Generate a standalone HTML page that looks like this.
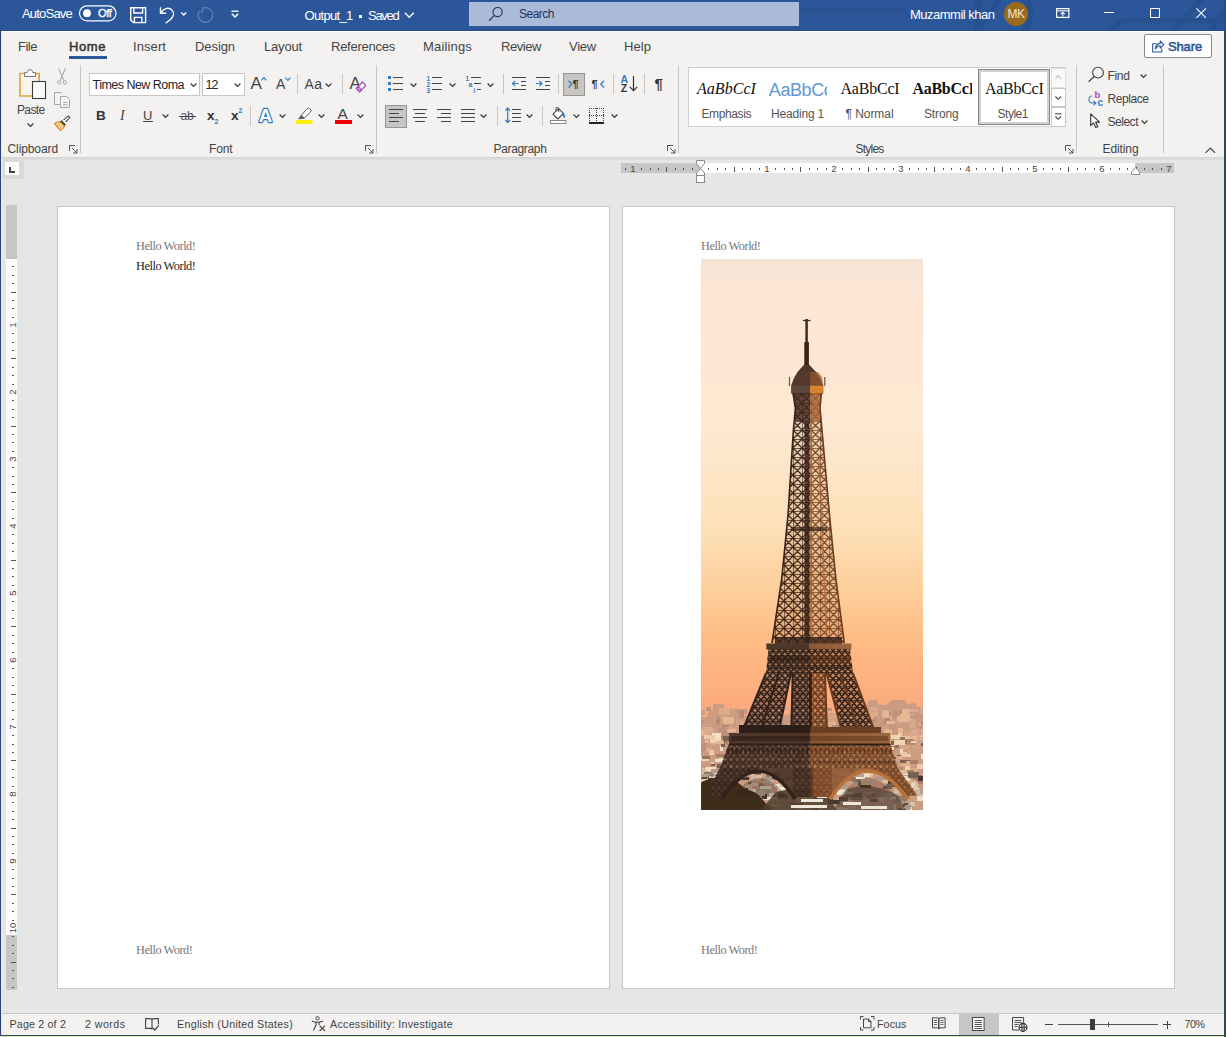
<!DOCTYPE html>
<html>
<head>
<meta charset="utf-8">
<title>Output_1 - Word</title>
<style>
*{box-sizing:border-box;margin:0;padding:0}
html,body{width:1226px;height:1037px;overflow:hidden;background:#e6e6e6;font-family:"Liberation Sans",sans-serif;font-size:12px;color:#444}
#win{position:absolute;left:0;top:0;width:1226px;height:1037px;overflow:hidden;background:#e6e6e6}
#win div,#win span,#win svg{position:absolute}
.t{white-space:nowrap;line-height:1;color:#444;font-size:12px}
.ts{font-family:"Liberation Serif",serif}
.b{background:#f3f2f1}
svg{overflow:visible}
.ln{stroke:#444;stroke-width:1;fill:none;shape-rendering:crispEdges}
.st{stroke:#444;stroke-width:1;fill:none}
.bl{stroke:#2e7cc4;stroke-width:1;fill:none}
.vs{width:1px;background:#c8c6c4}
.gs{width:1px;background:#c8c6c4;top:65px;height:88px}
</style>
</head>
<body>
<svg width="0" height="0" style="position:absolute">
<defs>
<symbol id="chev" viewBox="0 0 8 5" overflow="visible"><path d="M0.6 0.5 L3.5 3.4 L6.4 0.5" fill="none" stroke="#3b3b3b" stroke-width="1.3"/></symbol>
<symbol id="dl" viewBox="0 0 9 9" overflow="visible"><path d="M0.5 6 V0.5 H6 M3 3 L8 8 M8 4 V8 H4" fill="none" stroke="#555" stroke-width="1"/></symbol>
</defs>
</svg>
<div id="win">

<!-- TITLE -->
<div style="left:0px;top:0px;width:1226px;height:31px;background:#2b579a;"></div>
<svg style="left:800px;top:0px;overflow:hidden" width="426" height="31" viewBox="0 0 426 31"><g fill="none" stroke="#27508f" stroke-width="5"><path d="M-2 10 H105" stroke-width="4"/><circle cx="203" cy="14" r="27" stroke-width="6"/><path d="M172 36 L200 -2"/><path d="M308 34 L321 20.5 H430 M370 34 L403 -2 M409 34 L432 0"/></g></svg>
<div style="left:0px;top:30px;width:1226px;height:1px;background:#2a4a7e;"></div>
<span id="t1" class="t" style="left:22px;top:7.00px;font-size:13px;color:#fff;letter-spacing:-0.797px;">AutoSave</span>
<svg style="left:78px;top:5px;" width="40" height="17" viewBox="0 0 40 17"><rect x="1.5" y="0.8" width="36.5" height="15" rx="7.5" fill="none" stroke="#fff" stroke-width="1.2"/><circle cx="9" cy="8.2" r="3.9" fill="#fff"/></svg>
<span id="t2" class="t" style="left:98px;top:8.00px;font-size:11px;color:#fff;letter-spacing:-0.328px;-webkit-text-stroke:0.35px #fff;">Off</span>
<svg style="left:130px;top:7px;" width="17" height="17" viewBox="0 0 17 17"><path d="M0.7 0.7 H15.6 V15.6 H3.4 L0.7 12.9 Z" fill="none" stroke="#fff" stroke-width="1.4"/><path d="M3.8 0.7 V6 H12.6 V0.7" fill="none" stroke="#fff" stroke-width="1.4"/><path d="M4.4 15.6 V10.4 H11.8 V15.6" fill="none" stroke="#fff" stroke-width="1.4"/></svg>
<svg style="left:159px;top:6px;" width="17" height="18" viewBox="0 0 17 18"><path d="M1.5 1.2 V7.3 H7.2" fill="none" stroke="#fff" stroke-width="1.4"/><path d="M1.8 7 C4 2.5 9.5 0.8 12.8 4 C16 7.2 14 11 12 13 L6.6 17.2" fill="none" stroke="#fff" stroke-width="1.4"/></svg>
<svg style="left:181px;top:12px;" width="6" height="4" viewBox="0 0 6 4"><path d="M0.3 0.5 L2.8 3 L5.3 0.5" fill="none" stroke="#fff" stroke-width="1.3"/></svg>
<svg style="left:197px;top:6px;" width="18" height="18" viewBox="0 0 18 18"><path d="M5.6 1.2 V5.8 H1.2" fill="none" stroke="#5f80b6" stroke-width="1.3"/><path d="M6.5 2 A7.3 7.3 0 1 1 1.6 6.6" fill="none" stroke="#5f80b6" stroke-width="1.3"/></svg>
<svg style="left:230.5px;top:10px;" width="8" height="9" viewBox="0 0 8 9"><path d="M0.5 1.2 H7.5" stroke="#fff" stroke-width="1.3" fill="none"/><path d="M0.8 3.8 L4 7 L7.2 3.8" fill="none" stroke="#fff" stroke-width="1.5"/></svg>
<span id="t3" class="t" style="left:304.5px;top:9.00px;font-size:13px;color:#fff;letter-spacing:-0.688px;">Output_1</span>
<div style="left:359px;top:15px;width:3px;height:3px;background:#fff;"></div>
<span id="t4" class="t" style="left:368px;top:9.00px;font-size:13px;color:#fff;letter-spacing:-1.275px;">Saved</span>
<svg style="left:403.5px;top:11.5px;" width="11" height="7" viewBox="0 0 11 7"><path d="M0.8 0.8 L5.3 5.3 L9.8 0.8" fill="none" stroke="#fff" stroke-width="1.3"/></svg>
<div style="left:469px;top:2px;width:330px;height:24px;background:#a9bbd9;"></div>
<svg style="left:488px;top:6px;" width="16" height="16" viewBox="0 0 16 16"><circle cx="9.6" cy="6" r="4.6" fill="none" stroke="#2f3f5c" stroke-width="1.2"/><path d="M6.4 9.4 L1 14.8" stroke="#2f3f5c" stroke-width="1.3" fill="none"/></svg>
<span id="t5" class="t" style="left:519px;top:8.00px;font-size:12px;color:#1f3058;letter-spacing:-0.505px;">Search</span>
<span id="t6" class="t" style="left:910px;top:8.00px;font-size:13px;color:#fff;letter-spacing:-0.502px;">Muzammil khan</span>
<div style="left:1004px;top:2px;width:24px;height:24px;border-radius:12px;background:#9a6b1a"></div>
<span id="t7" class="t" style="left:1007.5px;top:8.00px;font-size:12px;color:#f3e6cf;letter-spacing:-0.500px;">MK</span>
<svg style="left:1056px;top:8px;" width="14" height="10" viewBox="0 0 14 10"><rect x="0.6" y="0.6" width="12.3" height="8.8" fill="none" stroke="#fff" stroke-width="1.2"/><path d="M0.6 2.8 H12.9" stroke="#fff" stroke-width="1.1"/><path d="M6.75 8.4 V4.4 M4.7 6.2 L6.75 4.2 L8.8 6.2" fill="none" stroke="#fff" stroke-width="1.1"/></svg>
<div style="left:1104px;top:12px;width:10px;height:1px;background:#fff;"></div>
<div style="left:1150px;top:8px;width:10px;height:10px;border:1px solid #fff"></div>
<svg style="left:1196px;top:8px;" width="10" height="10" viewBox="0 0 10 10"><path d="M0.4 0.4 L9.9 9.9 M9.9 0.4 L0.4 9.9" stroke="#fff" stroke-width="1.1" fill="none"/></svg>
<!-- TABS -->
<div style="left:0px;top:31px;width:1226px;height:126px;background:#f3f2f1;"></div>
<div style="left:0px;top:31px;width:1226px;height:1px;background:#fbfdff;"></div>
<span id="t8" class="t" style="left:18px;top:40.00px;font-size:13px;letter-spacing:-0.488px;">File</span>
<span id="t9" class="t" style="left:69px;top:40.00px;font-size:13px;color:#333;letter-spacing:0.578px;-webkit-text-stroke:0.5px #333;">Home</span>
<span id="t10" class="t" style="left:133px;top:40.00px;font-size:13px;letter-spacing:0.081px;">Insert</span>
<span id="t11" class="t" style="left:195px;top:40.00px;font-size:13px;letter-spacing:-0.078px;">Design</span>
<span id="t12" class="t" style="left:264px;top:40.00px;font-size:13px;letter-spacing:-0.174px;">Layout</span>
<span id="t13" class="t" style="left:331px;top:40.00px;font-size:13px;letter-spacing:-0.248px;">References</span>
<span id="t14" class="t" style="left:423px;top:40.00px;font-size:13px;letter-spacing:0.164px;">Mailings</span>
<span id="t15" class="t" style="left:501px;top:40.00px;font-size:13px;letter-spacing:-0.438px;">Review</span>
<span id="t16" class="t" style="left:569px;top:40.00px;font-size:13px;letter-spacing:-0.238px;">View</span>
<span id="t17" class="t" style="left:624px;top:40.00px;font-size:13px;letter-spacing:0.062px;">Help</span>
<div style="left:69px;top:56px;width:38px;height:3px;background:#2b579a;"></div>
<div style="left:1144px;top:34px;width:68px;height:24px;background:#fff;border:1px solid #8a8886;border-radius:2px"></div>
<svg style="left:1152px;top:40px;" width="13" height="13" viewBox="0 0 13 13"><path d="M4.5 3.8 H0.7 V12 H9.8 V8.6" fill="none" stroke="#2b579a" stroke-width="1.1"/><path d="M3.4 9 C3.6 5.6 5.6 3.6 8.2 3.4 V1 L11.8 4.6 L8.2 8.2 V5.8 C6.2 5.8 4.6 6.8 3.4 9 Z" fill="none" stroke="#2b579a" stroke-width="1.1" stroke-linejoin="round"/></svg>
<span id="t18" class="t" style="left:1168px;top:40.00px;font-size:13px;color:#2b579a;letter-spacing:-0.141px;-webkit-text-stroke:0.55px #2b579a;">Share</span>
<!-- RIBBON: clipboard+font -->
<svg style="left:18px;top:68px;" width="30" height="32" viewBox="0 0 30 32"><path d="M6.5 5.5 H2 V28 H14" fill="none" stroke="#e8a33d" stroke-width="1.7"/><path d="M17.5 5.5 H21.2 V13" fill="none" stroke="#e8a33d" stroke-width="1.7"/><rect x="3" y="6.5" width="11" height="20.5" fill="#faf6ef"/><path d="M6.5 8.5 V4.5 H9.2 C9.2 0.6 14.8 0.6 14.8 4.5 H17.5 V8.5 Z" fill="#fafafa" stroke="#777" stroke-width="1"/><rect x="14.5" y="13.5" width="13" height="17" fill="#fafafa" stroke="#3b3b3b" stroke-width="1.1"/></svg>
<span id="t19" class="t" style="left:17px;top:104.00px;font-size:12px;letter-spacing:-0.637px;">Paste</span>
<svg style="left:26.5px;top:123px" width="8" height="5"><use href="#chev"/></svg>
<svg style="left:57px;top:68px;" width="10" height="17" viewBox="0 0 10 17"><path d="M1.6 0.5 L6.9 12.6 M8.4 0.5 L3.1 12.6" stroke="#a6a6a6" stroke-width="1.1" fill="none"/><circle cx="2.3" cy="14.4" r="1.7" fill="none" stroke="#a6a6a6" stroke-width="1"/><circle cx="7.7" cy="14.4" r="1.7" fill="none" stroke="#a6a6a6" stroke-width="1"/></svg>
<svg style="left:54px;top:92px;" width="17" height="17" viewBox="0 0 17 17"><path d="M6 12.5 H0.5 V0.5 H6.5 L8 2" fill="none" stroke="#a6a6a6" stroke-width="1"/><path d="M6.5 4.5 H12.5 L15.5 7.5 V15.5 H6.5 Z" fill="#f6f6f6" stroke="#a6a6a6" stroke-width="1"/><path d="M9 10.5 H13.5 M9 12.8 H13.5" stroke="#a6a6a6" stroke-width="1"/></svg>
<svg style="left:54px;top:115px;" width="17" height="17" viewBox="0 0 17 17"><path d="M9.5 5.2 L14.2 0.9 L15.8 2.6 L11.6 7.2" fill="#fff" stroke="#444" stroke-width="1.1"/><path d="M7.4 5.4 L11.6 9.6 L10.3 10.9 L6.1 6.7 Z" fill="#444" stroke="#444" stroke-width="0.8"/><path d="M5.6 6.6 L0.6 8.4 C2.4 11.2 4.2 13.4 6.6 15.4 L10.6 11.4 Z" fill="#f7dcb4" stroke="#e08a1e" stroke-width="1.2" stroke-linejoin="round"/><path d="M3.2 10.8 L6 9.8 M5.4 13.4 L7.6 11.6" stroke="#e08a1e" stroke-width="0.9"/></svg>
<span id="t20" class="t" style="left:7.5px;top:143.00px;font-size:12px;letter-spacing:-0.097px;">Clipboard</span>
<svg style="left:69px;top:144.5px" width="9" height="9"><use href="#dl"/></svg>
<div class="gs" style="left:80px"></div>
<div style="left:89px;top:73px;width:111px;height:23px;background:#fff;border:1px solid #c8c6c4"></div>
<span id="t21" class="t" style="left:92.5px;top:79.00px;font-size:12.5px;color:#262626;letter-spacing:-0.526px;">Times New Roma</span>
<svg style="left:190px;top:83px" width="8" height="5"><use href="#chev"/></svg>
<div style="left:202px;top:73px;width:43px;height:23px;background:#fff;border:1px solid #c8c6c4"></div>
<span id="t22" class="t" style="left:205.5px;top:79.00px;font-size:12.5px;color:#262626;letter-spacing:-0.953px;">12</span>
<svg style="left:234px;top:83px" width="8" height="5"><use href="#chev"/></svg>
<span id="t23" class="t" style="left:250.5px;top:75.00px;font-size:17px;letter-spacing:0.656px;">A</span>
<svg style="left:260.5px;top:76.5px;" width="6" height="4" viewBox="0 0 6 4"><path d="M0.4 3.4 L2.9 0.7 L5.4 3.4" fill="none" stroke="#2e7cc4" stroke-width="1.2"/></svg>
<span id="t24" class="t" style="left:276px;top:77.00px;font-size:14px;letter-spacing:0.656px;">A</span>
<svg style="left:284.5px;top:76.5px;" width="6" height="4" viewBox="0 0 6 4"><path d="M0.4 0.6 L2.9 3.3 L5.4 0.6" fill="none" stroke="#2e7cc4" stroke-width="1.2"/></svg>
<div class="vs" style="left:297px;top:74px;height:20px"></div>
<span id="t25" class="t" style="left:304.5px;top:77.00px;font-size:14px;letter-spacing:0.438px;">Aa</span>
<svg style="left:325px;top:83px" width="8" height="5"><use href="#chev"/></svg>
<div class="vs" style="left:342px;top:74px;height:20px"></div>
<span id="t26" class="t" style="left:349.5px;top:75.00px;font-size:17px;letter-spacing:0.156px;">A</span>
<svg style="left:356px;top:81px;" width="11" height="12" viewBox="0 0 11 12"><path d="M6.5 1 L9.8 4.6 L3.6 10.8 L0.3 7.4 Z" fill="#f3f2f1" stroke="#a24db3" stroke-width="1.2" stroke-linejoin="round"/><path d="M2.3 5.3 L5.6 8.8 L3.6 10.8 L0.3 7.4 Z" fill="#d892e0" stroke="#a24db3" stroke-width="1.1" stroke-linejoin="round"/></svg>
<span id="t27" class="t" style="left:96px;top:109.00px;font-size:13.5px;color:#333;font-weight:bold;letter-spacing:-1.250px;">B</span>
<span id="t28" class="t ts" style="left:120px;top:109.00px;font-size:14px;font-style:italic;letter-spacing:2.328px;">I</span>
<span id="t29" class="t" style="left:143px;top:109.00px;font-size:13px;letter-spacing:0.109px;">U</span>
<div style="left:143px;top:121px;width:9.5px;height:1px;background:#444;"></div>
<svg style="left:162px;top:114px" width="8" height="5"><use href="#chev"/></svg>
<span id="t30" class="t" style="left:180.5px;top:110.00px;font-size:12px;color:#555;letter-spacing:-0.180px;">ab</span>
<div style="left:179px;top:116px;width:16.5px;height:1px;background:#444;"></div>
<span id="t31" class="t" style="left:207px;top:109.00px;font-size:13.5px;color:#333;font-weight:bold;letter-spacing:-0.516px;">x</span>
<span id="t32" class="t" style="left:214.5px;top:118.00px;font-size:7px;color:#2e7cc4;font-weight:bold;">2</span>
<span id="t33" class="t" style="left:231px;top:109.00px;font-size:13.5px;color:#333;font-weight:bold;letter-spacing:-0.516px;">x</span>
<span id="t34" class="t" style="left:238.5px;top:107.00px;font-size:7px;color:#2e7cc4;font-weight:bold;">2</span>
<div class="vs" style="left:250px;top:106px;height:20px"></div>
<svg style="left:257px;top:106px;" width="20" height="20" viewBox="0 0 20 20"><text x="1.7" y="15.8" font-family="Liberation Sans" font-weight="bold" font-size="18.5" fill="#fff" stroke="#2e7cc4" stroke-width="2.4" paint-order="stroke" stroke-linejoin="round">A</text></svg>
<svg style="left:278.5px;top:114px" width="8" height="5"><use href="#chev"/></svg>
<svg style="left:296px;top:107px;" width="17" height="18" viewBox="0 0 17 18"><rect x="0" y="13" width="16.5" height="4" fill="#ffef00"/><path d="M5.2 8.4 L11.4 1.6 Q12.6 0.6 13.8 1.8 L14.6 2.6 Q15.6 3.8 14.6 4.8 L8.2 11.2 Z" fill="#fff" stroke="#555" stroke-width="1"/><path d="M5.2 8.4 L8.2 11.2 L5.6 11.6 L2.6 11.8 Z" fill="#555" stroke="#555" stroke-width="0.8"/></svg>
<svg style="left:318px;top:114px" width="8" height="5"><use href="#chev"/></svg>
<span id="t35" class="t" style="left:337.5px;top:106.00px;font-size:15.5px;letter-spacing:1.656px;">A</span>
<div style="left:335px;top:120px;width:16.5px;height:4px;background:#ee0000;"></div>
<svg style="left:357px;top:114px" width="8" height="5"><use href="#chev"/></svg>
<span id="t36" class="t" style="left:209px;top:143.00px;font-size:12px;letter-spacing:-0.129px;">Font</span>
<svg style="left:365px;top:144.5px" width="9" height="9"><use href="#dl"/></svg>
<div class="gs" style="left:376px"></div>
<!-- RIBBON: paragraph -->
<svg style="left:388px;top:75px;" width="16" height="18" viewBox="0 0 16 18"><rect x="0" y="1" width="3" height="3" fill="#2e7cc4"/><path d="M5 2.5 H15" stroke="#444" stroke-width="1" shape-rendering="crispEdges"/><rect x="0" y="7" width="3" height="3" fill="#2e7cc4"/><path d="M5 8.5 H15" stroke="#444" stroke-width="1" shape-rendering="crispEdges"/><rect x="0" y="13" width="3" height="3" fill="#2e7cc4"/><path d="M5 14.5 H15" stroke="#444" stroke-width="1" shape-rendering="crispEdges"/></svg>
<svg style="left:410px;top:83px" width="8" height="5"><use href="#chev"/></svg>
<svg style="left:427px;top:75px;" width="16" height="18" viewBox="0 0 16 18"><path d="M5 2.5 H15" stroke="#444" stroke-width="1" shape-rendering="crispEdges"/><path d="M5 8.5 H15" stroke="#444" stroke-width="1" shape-rendering="crispEdges"/><path d="M5 14.5 H15" stroke="#444" stroke-width="1" shape-rendering="crispEdges"/></svg>
<span id="t37" class="t" style="left:426.5px;top:76.00px;font-size:6.5px;color:#2e7cc4;font-weight:bold;">1</span>
<span id="t38" class="t" style="left:426.5px;top:82.00px;font-size:6.5px;color:#2e7cc4;font-weight:bold;">2</span>
<span id="t39" class="t" style="left:426.5px;top:88.00px;font-size:6.5px;color:#2e7cc4;font-weight:bold;">3</span>
<svg style="left:449px;top:83px" width="8" height="5"><use href="#chev"/></svg>
<svg style="left:465px;top:75px;" width="17" height="18" viewBox="0 0 17 18"><path d="M6 2.5 H16" stroke="#444" stroke-width="1" shape-rendering="crispEdges"/><path d="M9 8.5 H16" stroke="#444" stroke-width="1" shape-rendering="crispEdges"/><path d="M12 14.5 H16" stroke="#444" stroke-width="1" shape-rendering="crispEdges"/></svg>
<span id="t40" class="t" style="left:465.5px;top:76.00px;font-size:6.5px;color:#2e7cc4;font-weight:bold;">1</span>
<span id="t41" class="t" style="left:468.5px;top:81.00px;font-size:7px;color:#2e7cc4;font-weight:bold;">a</span>
<span id="t42" class="t" style="left:473.5px;top:88.00px;font-size:6.5px;color:#2e7cc4;font-weight:bold;">i</span>
<svg style="left:486.5px;top:83px" width="8" height="5"><use href="#chev"/></svg>
<div class="vs" style="left:503px;top:74px;height:20px"></div>
<svg style="left:512px;top:75px;" width="15" height="18" viewBox="0 0 15 18"><path d="M0 2.5 H14" stroke="#444" stroke-width="1" shape-rendering="crispEdges"/><path d="M8.5 6.5 H14" stroke="#444" stroke-width="1" shape-rendering="crispEdges"/><path d="M8.5 10.5 H14" stroke="#444" stroke-width="1" shape-rendering="crispEdges"/><path d="M0 14.5 H14" stroke="#444" stroke-width="1" shape-rendering="crispEdges"/><path d="M0.5 8.5 H6.5 M3.2 5.8 L0.5 8.5 L3.2 11.2" fill="none" stroke="#2e7cc4" stroke-width="1.2"/></svg>
<svg style="left:536px;top:75px;" width="15" height="18" viewBox="0 0 15 18"><path d="M0 2.5 H14" stroke="#444" stroke-width="1" shape-rendering="crispEdges"/><path d="M8.5 6.5 H14" stroke="#444" stroke-width="1" shape-rendering="crispEdges"/><path d="M8.5 10.5 H14" stroke="#444" stroke-width="1" shape-rendering="crispEdges"/><path d="M0 14.5 H14" stroke="#444" stroke-width="1" shape-rendering="crispEdges"/><path d="M0 8.5 H6 M3.3 5.8 L6 8.5 L3.3 11.2" fill="none" stroke="#2e7cc4" stroke-width="1.2"/></svg>
<div class="vs" style="left:558px;top:74px;height:20px"></div>
<div style="left:563px;top:73px;width:22px;height:23px;background:#c8c6c4;border:1px solid #979593"></div>
<svg style="left:567.5px;top:80px;" width="5" height="9" viewBox="0 0 5 9"><path d="M0.6 0.8 L3.8 4.2 L0.6 7.6" fill="none" stroke="#2e7cc4" stroke-width="1.3"/></svg>
<span id="t43" class="t" style="left:572.5px;top:79.00px;font-size:11px;color:#333;font-weight:bold;">¶</span>
<span id="t44" class="t" style="left:591.5px;top:79.00px;font-size:11px;color:#333;font-weight:bold;">¶</span>
<svg style="left:599.5px;top:80px;" width="5" height="9" viewBox="0 0 5 9"><path d="M4 0.8 L0.8 4.2 L4 7.6" fill="none" stroke="#2e7cc4" stroke-width="1.3"/></svg>
<div class="vs" style="left:613px;top:74px;height:20px"></div>
<span id="t45" class="t" style="left:620.5px;top:74.00px;font-size:10.5px;color:#2e7cc4;font-weight:bold;letter-spacing:0.406px;">A</span>
<span id="t46" class="t" style="left:620.8px;top:83.00px;font-size:10.5px;color:#333;font-weight:bold;letter-spacing:0.578px;">Z</span>
<svg style="left:629px;top:76px;" width="9" height="16" viewBox="0 0 9 16"><path d="M4.5 0 V14.5 M0.8 10.8 L4.5 14.6 L8.2 10.8" fill="none" stroke="#333" stroke-width="1.2"/></svg>
<div class="vs" style="left:644px;top:74px;height:20px"></div>
<span id="t47" class="t" style="left:654.5px;top:76.00px;font-size:15px;color:#333;font-weight:bold;letter-spacing:2.156px;">¶</span>
<div style="left:385px;top:105px;width:22px;height:23px;background:#c8c6c4;border:1px solid #979593"></div>
<svg style="left:389px;top:106px;" width="15" height="18" viewBox="0 0 15 18"><path d="M0 3.5 H14" stroke="#444" stroke-width="1" shape-rendering="crispEdges"/><path d="M0 7.5 H10" stroke="#444" stroke-width="1" shape-rendering="crispEdges"/><path d="M0 11.5 H14" stroke="#444" stroke-width="1" shape-rendering="crispEdges"/><path d="M0 15.5 H10" stroke="#444" stroke-width="1" shape-rendering="crispEdges"/></svg>
<svg style="left:413px;top:106px;" width="15" height="18" viewBox="0 0 15 18"><path d="M0 3.5 H14" stroke="#444" stroke-width="1" shape-rendering="crispEdges"/><path d="M2 7.5 H12" stroke="#444" stroke-width="1" shape-rendering="crispEdges"/><path d="M0 11.5 H14" stroke="#444" stroke-width="1" shape-rendering="crispEdges"/><path d="M2 15.5 H12" stroke="#444" stroke-width="1" shape-rendering="crispEdges"/></svg>
<svg style="left:437px;top:106px;" width="15" height="18" viewBox="0 0 15 18"><path d="M0 3.5 H14" stroke="#444" stroke-width="1" shape-rendering="crispEdges"/><path d="M4 7.5 H14" stroke="#444" stroke-width="1" shape-rendering="crispEdges"/><path d="M0 11.5 H14" stroke="#444" stroke-width="1" shape-rendering="crispEdges"/><path d="M4 15.5 H14" stroke="#444" stroke-width="1" shape-rendering="crispEdges"/></svg>
<svg style="left:461px;top:106px;" width="15" height="18" viewBox="0 0 15 18"><path d="M0 3.5 H14" stroke="#444" stroke-width="1" shape-rendering="crispEdges"/><path d="M0 7.5 H14" stroke="#444" stroke-width="1" shape-rendering="crispEdges"/><path d="M0 11.5 H14" stroke="#444" stroke-width="1" shape-rendering="crispEdges"/><path d="M0 15.5 H14" stroke="#444" stroke-width="1" shape-rendering="crispEdges"/></svg>
<svg style="left:480px;top:114px" width="8" height="5"><use href="#chev"/></svg>
<div class="vs" style="left:497px;top:106px;height:20px"></div>
<svg style="left:505px;top:106px;" width="17" height="19" viewBox="0 0 17 19"><path d="M7 3.5 H16" stroke="#444" stroke-width="1" shape-rendering="crispEdges"/><path d="M7 7.5 H16" stroke="#444" stroke-width="1" shape-rendering="crispEdges"/><path d="M7 11.5 H16" stroke="#444" stroke-width="1" shape-rendering="crispEdges"/><path d="M7 15.5 H16" stroke="#444" stroke-width="1" shape-rendering="crispEdges"/><path d="M2.7 2 V16.5 M0.3 4.6 L2.7 2 L5.1 4.6 M0.3 14 L2.7 16.6 L5.1 14" fill="none" stroke="#2e7cc4" stroke-width="1.2"/></svg>
<svg style="left:525.5px;top:114px" width="8" height="5"><use href="#chev"/></svg>
<div class="vs" style="left:542px;top:106px;height:20px"></div>
<svg style="left:550px;top:107px;" width="17" height="18" viewBox="0 0 17 18"><rect x="0.5" y="13.5" width="15.5" height="3" fill="#fff" stroke="#8a8886" stroke-width="1"/><path d="M3 7.2 L8.6 1.6 L13.4 6.4 L7.8 12 Z" fill="#fff" stroke="#444" stroke-width="1.1" stroke-linejoin="round"/><path d="M8.6 5 V1.8 Q8.6 0.4 7.2 0.4 Q6 0.4 6 1.8 V4.2" fill="none" stroke="#444" stroke-width="1"/><path d="M12.6 5.6 Q15 7.4 14.4 10.6 Q12.6 9 12.8 6.2 Z" fill="#2e7cc4" stroke="#2e7cc4" stroke-width="1"/></svg>
<svg style="left:573px;top:114px" width="8" height="5"><use href="#chev"/></svg>
<svg style="left:589px;top:108px;" width="16" height="16" viewBox="0 0 16 16"><g fill="#444" shape-rendering="crispEdges"><rect x="0" y="0" width="1" height="1"/><rect x="0" y="0" width="1" height="1"/><rect x="14" y="0" width="1" height="1"/><rect x="7" y="0" width="1" height="1"/><rect x="0" y="7" width="1" height="1"/><rect x="2" y="0" width="1" height="1"/><rect x="0" y="2" width="1" height="1"/><rect x="14" y="2" width="1" height="1"/><rect x="7" y="2" width="1" height="1"/><rect x="2" y="7" width="1" height="1"/><rect x="4" y="0" width="1" height="1"/><rect x="0" y="4" width="1" height="1"/><rect x="14" y="4" width="1" height="1"/><rect x="7" y="4" width="1" height="1"/><rect x="4" y="7" width="1" height="1"/><rect x="6" y="0" width="1" height="1"/><rect x="0" y="6" width="1" height="1"/><rect x="14" y="6" width="1" height="1"/><rect x="7" y="6" width="1" height="1"/><rect x="6" y="7" width="1" height="1"/><rect x="8" y="0" width="1" height="1"/><rect x="0" y="8" width="1" height="1"/><rect x="14" y="8" width="1" height="1"/><rect x="7" y="8" width="1" height="1"/><rect x="8" y="7" width="1" height="1"/><rect x="10" y="0" width="1" height="1"/><rect x="0" y="10" width="1" height="1"/><rect x="14" y="10" width="1" height="1"/><rect x="7" y="10" width="1" height="1"/><rect x="10" y="7" width="1" height="1"/><rect x="12" y="0" width="1" height="1"/><rect x="0" y="12" width="1" height="1"/><rect x="14" y="12" width="1" height="1"/><rect x="7" y="12" width="1" height="1"/><rect x="12" y="7" width="1" height="1"/><rect x="14" y="0" width="1" height="1"/><rect x="0" y="14" width="1" height="1"/><rect x="14" y="14" width="1" height="1"/><rect x="7" y="14" width="1" height="1"/><rect x="14" y="7" width="1" height="1"/></g><rect x="0" y="14" width="15" height="2" fill="#222" shape-rendering="crispEdges"/></svg>
<svg style="left:611px;top:114px" width="8" height="5"><use href="#chev"/></svg>
<span id="t48" class="t" style="left:493.5px;top:143.00px;font-size:12px;letter-spacing:-0.339px;">Paragraph</span>
<svg style="left:667px;top:144.5px" width="9" height="9"><use href="#dl"/></svg>
<div class="gs" style="left:678px"></div>
<!-- RIBBON: styles+editing -->
<div style="left:688px;top:67px;width:378px;height:60px;background:#fff;border:1px solid #d2d0ce"></div>
<span id="t49" class="t ts" style="left:697px;top:81.00px;font-size:16px;color:#111;font-style:italic;letter-spacing:0.049px;">AaBbCcI</span>
<span id="t50" class="t" style="left:701.5px;top:108.00px;font-size:12px;color:#555;letter-spacing:-0.398px;">Emphasis</span>
<div style="left:765px;top:70px;width:62px;height:34px;overflow:hidden"><span class="t" style="left:3.8px;top:11px;font-size:18px;color:#6497d0;letter-spacing:-0.4px">AaBbCc</span></div>
<span id="t51" class="t" style="left:771px;top:108.00px;font-size:12px;color:#555;letter-spacing:-0.191px;">Heading 1</span>
<span id="t52" class="t ts" style="left:840.5px;top:81.00px;font-size:16px;color:#111;letter-spacing:-0.205px;">AaBbCcI</span>
<span id="t53" class="t" style="left:845.5px;top:108.00px;font-size:12px;color:#555;letter-spacing:-0.057px;">¶ Normal</span>
<div style="left:908px;top:70px;width:63.5px;height:34px;overflow:hidden"><span id="t54" class="t ts" style="left:4.5px;top:11.00px;font-size:16px;color:#111;font-weight:bold;letter-spacing:-0.288px;">AaBbCcI</span></div>
<span id="t55" class="t" style="left:924px;top:108.00px;font-size:12px;color:#555;letter-spacing:-0.143px;">Strong</span>
<div style="left:978px;top:69px;width:72px;height:56px;background:#fff;border:1px solid #8a8886;box-shadow:inset 0 0 0 2px #d2d0ce"></div>
<span id="t56" class="t ts" style="left:985px;top:81.00px;font-size:16px;color:#111;letter-spacing:-0.277px;">AaBbCcI</span>
<span id="t57" class="t" style="left:997.5px;top:108.00px;font-size:12px;color:#555;letter-spacing:-0.477px;">Style1</span>
<div style="left:1051px;top:68px;width:15px;height:20px;background:#faf9f8;border:1px solid #e1dfdd"></div>
<div style="left:1051px;top:88px;width:15px;height:19px;background:#fff;border:1px solid #c8c6c4"></div>
<div style="left:1051px;top:107px;width:15px;height:20px;background:#fff;border:1px solid #c8c6c4"></div>
<svg style="left:1055px;top:75px;" width="7" height="4" viewBox="0 0 7 4"><path d="M0.4 3.4 L3.2 0.6 L6 3.4" fill="none" stroke="#c0bebc" stroke-width="1.1"/></svg>
<svg style="left:1055px;top:95.5px;" width="7" height="4" viewBox="0 0 7 4"><path d="M0.4 0.5 L3.2 3.3 L6 0.5" fill="none" stroke="#444" stroke-width="1.1"/></svg>
<svg style="left:1055px;top:112.5px;" width="7" height="8" viewBox="0 0 7 8"><path d="M0 0.8 H6.5" stroke="#444" stroke-width="1.1"/><path d="M0.4 3.5 L3.2 6.3 L6 3.5" fill="none" stroke="#444" stroke-width="1.1"/></svg>
<span id="t58" class="t" style="left:855.5px;top:143.00px;font-size:12px;letter-spacing:-0.781px;">Styles</span>
<svg style="left:1065px;top:144.5px" width="9" height="9"><use href="#dl"/></svg>
<div class="gs" style="left:1076px"></div>
<svg style="left:1088px;top:66px;" width="17" height="17" viewBox="0 0 17 17"><circle cx="10" cy="6.6" r="5.4" fill="none" stroke="#444" stroke-width="1.1"/><path d="M6.2 10.6 L0.6 15.8" stroke="#444" stroke-width="1.3" fill="none"/></svg>
<span id="t59" class="t" style="left:1107.5px;top:70.00px;font-size:12px;letter-spacing:-0.336px;">Find</span>
<svg style="left:1140px;top:73.5px" width="8" height="5"><use href="#chev"/></svg>
<span id="t60" class="t" style="left:1094.5px;top:90.00px;font-size:9.5px;color:#b04fc0;font-weight:bold;">b</span>
<span id="t61" class="t" style="left:1097.5px;top:98.00px;font-size:10px;color:#2e7cc4;font-weight:bold;">c</span>
<svg style="left:1088px;top:95px;" width="9" height="11" viewBox="0 0 9 11"><path d="M3.6 0.8 C0 2.4 0 6.6 3.2 8 H7.8 M5.4 5.6 L7.9 8 L5.4 10.4" fill="none" stroke="#2e7cc4" stroke-width="1.1"/></svg>
<span id="t62" class="t" style="left:1107.5px;top:93.00px;font-size:12px;letter-spacing:-0.433px;">Replace</span>
<svg style="left:1090px;top:113px;" width="11" height="16" viewBox="0 0 11 16"><path d="M0.7 0.8 V12.6 L3.6 9.9 L5.8 14.6 L7.8 13.7 L5.6 9.1 L9.6 9.1 Z" fill="#fff" stroke="#333" stroke-width="1.1" stroke-linejoin="round"/></svg>
<span id="t63" class="t" style="left:1107.5px;top:116.00px;font-size:12px;letter-spacing:-0.477px;">Select</span>
<svg style="left:1141px;top:120px" width="8" height="5"><use href="#chev"/></svg>
<span id="t64" class="t" style="left:1102.5px;top:143.00px;font-size:12px;letter-spacing:-0.100px;">Editing</span>
<div class="gs" style="left:1163px"></div>
<svg style="left:1205px;top:147px;" width="11" height="7" viewBox="0 0 11 7"><path d="M0.5 5.8 L5.3 1 L10.1 5.8" fill="none" stroke="#444" stroke-width="1.2"/></svg>
<div style="left:0;top:157px;width:1226px;height:6px;background:linear-gradient(#d3d3d3,#dcdcdc 35%,#e6e6e6)"></div>
<!-- DOC -->
<div style="left:0px;top:160px;width:1226px;height:853px;background:#e6e6e6;"></div>
<div style="left:3px;top:159px;width:21px;height:20px;background:#dadada;"></div>
<div style="left:5px;top:162px;width:14px;height:13px;background:#fdfdfd;"></div>
<svg style="left:9px;top:167px;" width="7" height="7" viewBox="0 0 7 7"><path d="M1 0 V5 H6" fill="none" stroke="#444" stroke-width="2" shape-rendering="crispEdges"/></svg>
<div style="left:621px;top:163px;width:79px;height:10px;background:#c6c6c6;"></div>
<div style="left:700px;top:163px;width:435px;height:10px;background:#fefefe;"></div>
<div style="left:1135px;top:163px;width:39px;height:10px;background:#c6c6c6;"></div>
<svg style="left:621px;top:163px;shape-rendering:crispEdges" width="553" height="10" viewBox="0 0 553 10"><rect x="4" y="5" width="1" height="2" fill="#555"/><rect x="20" y="5" width="1" height="2" fill="#555"/><rect x="29" y="5" width="1" height="2" fill="#555"/><rect x="37" y="5" width="1" height="2" fill="#555"/><rect x="45" y="4" width="1" height="5" fill="#555"/><rect x="54" y="5" width="1" height="2" fill="#555"/><rect x="62" y="5" width="1" height="2" fill="#555"/><rect x="71" y="5" width="1" height="2" fill="#555"/><rect x="87" y="5" width="1" height="2" fill="#555"/><rect x="96" y="5" width="1" height="2" fill="#555"/><rect x="104" y="5" width="1" height="2" fill="#555"/><rect x="113" y="4" width="1" height="5" fill="#555"/><rect x="121" y="5" width="1" height="2" fill="#555"/><rect x="129" y="5" width="1" height="2" fill="#555"/><rect x="138" y="5" width="1" height="2" fill="#555"/><rect x="154" y="5" width="1" height="2" fill="#555"/><rect x="163" y="5" width="1" height="2" fill="#555"/><rect x="171" y="5" width="1" height="2" fill="#555"/><rect x="179" y="4" width="1" height="5" fill="#555"/><rect x="188" y="5" width="1" height="2" fill="#555"/><rect x="196" y="5" width="1" height="2" fill="#555"/><rect x="205" y="5" width="1" height="2" fill="#555"/><rect x="221" y="5" width="1" height="2" fill="#555"/><rect x="230" y="5" width="1" height="2" fill="#555"/><rect x="238" y="5" width="1" height="2" fill="#555"/><rect x="247" y="4" width="1" height="5" fill="#555"/><rect x="255" y="5" width="1" height="2" fill="#555"/><rect x="263" y="5" width="1" height="2" fill="#555"/><rect x="272" y="5" width="1" height="2" fill="#555"/><rect x="288" y="5" width="1" height="2" fill="#555"/><rect x="297" y="5" width="1" height="2" fill="#555"/><rect x="305" y="5" width="1" height="2" fill="#555"/><rect x="313" y="4" width="1" height="5" fill="#555"/><rect x="322" y="5" width="1" height="2" fill="#555"/><rect x="330" y="5" width="1" height="2" fill="#555"/><rect x="339" y="5" width="1" height="2" fill="#555"/><rect x="355" y="5" width="1" height="2" fill="#555"/><rect x="364" y="5" width="1" height="2" fill="#555"/><rect x="372" y="5" width="1" height="2" fill="#555"/><rect x="381" y="4" width="1" height="5" fill="#555"/><rect x="389" y="5" width="1" height="2" fill="#555"/><rect x="397" y="5" width="1" height="2" fill="#555"/><rect x="406" y="5" width="1" height="2" fill="#555"/><rect x="422" y="5" width="1" height="2" fill="#555"/><rect x="431" y="5" width="1" height="2" fill="#555"/><rect x="439" y="5" width="1" height="2" fill="#555"/><rect x="447" y="4" width="1" height="5" fill="#555"/><rect x="456" y="5" width="1" height="2" fill="#555"/><rect x="464" y="5" width="1" height="2" fill="#555"/><rect x="473" y="5" width="1" height="2" fill="#555"/><rect x="489" y="5" width="1" height="2" fill="#555"/><rect x="498" y="5" width="1" height="2" fill="#555"/><rect x="506" y="5" width="1" height="2" fill="#555"/><rect x="515" y="4" width="1" height="5" fill="#555"/><rect x="523" y="5" width="1" height="2" fill="#555"/><rect x="531" y="5" width="1" height="2" fill="#555"/><rect x="540" y="5" width="1" height="2" fill="#555"/></svg>
<span id="t65" class="t" style="left:630.2px;top:164.00px;font-size:9.5px;">1</span>
<span id="t66" class="t" style="left:764.2px;top:164.00px;font-size:9.5px;">1</span>
<span id="t67" class="t" style="left:831.2px;top:164.00px;font-size:9.5px;">2</span>
<span id="t68" class="t" style="left:898.2px;top:164.00px;font-size:9.5px;">3</span>
<span id="t69" class="t" style="left:965.2px;top:164.00px;font-size:9.5px;">4</span>
<span id="t70" class="t" style="left:1032.2px;top:164.00px;font-size:9.5px;">5</span>
<span id="t71" class="t" style="left:1099.2px;top:164.00px;font-size:9.5px;">6</span>
<span id="t72" class="t" style="left:1166.2px;top:164.00px;font-size:9.5px;">7</span>
<svg style="left:696px;top:159.5px;" width="9" height="24" viewBox="0 0 9 24"><path d="M0.5 0.5 H8.5 V3.5 L4.5 8.5 L0.5 3.5 Z" fill="#fff" stroke="#8a8a8a" stroke-width="1"/><path d="M4.5 8.5 L8.5 13 V15.5 H0.5 V13 Z" fill="#fff" stroke="#8a8a8a" stroke-width="1"/><rect x="0.5" y="15.5" width="8" height="7" fill="#fff" stroke="#8a8a8a" stroke-width="1"/></svg>
<svg style="left:1131px;top:166.5px;" width="9" height="9" viewBox="0 0 9 9"><path d="M4.5 0.5 L8.5 5 V7.5 H0.5 V5 Z" fill="#fff" stroke="#8a8a8a" stroke-width="1"/></svg>
<div style="left:6px;top:205px;width:11px;height:53.5px;background:#c6c6c6;"></div>
<div style="left:6px;top:258.5px;width:11px;height:676.5px;background:#fefefe;"></div>
<div style="left:6px;top:935px;width:11px;height:55px;background:#c6c6c6;"></div>
<svg style="left:6px;top:205px;shape-rendering:crispEdges" width="11" height="785" viewBox="0 0 11 785"><rect x="6" y="61" width="2" height="1" fill="#555"/><rect x="6" y="70" width="2" height="1" fill="#555"/><rect x="6" y="78" width="2" height="1" fill="#555"/><rect x="5" y="87" width="5" height="1" fill="#555"/><rect x="6" y="95" width="2" height="1" fill="#555"/><rect x="6" y="103" width="2" height="1" fill="#555"/><rect x="6" y="112" width="2" height="1" fill="#555"/><rect x="6" y="128" width="2" height="1" fill="#555"/><rect x="6" y="137" width="2" height="1" fill="#555"/><rect x="6" y="145" width="2" height="1" fill="#555"/><rect x="5" y="153" width="5" height="1" fill="#555"/><rect x="6" y="162" width="2" height="1" fill="#555"/><rect x="6" y="170" width="2" height="1" fill="#555"/><rect x="6" y="179" width="2" height="1" fill="#555"/><rect x="6" y="195" width="2" height="1" fill="#555"/><rect x="6" y="204" width="2" height="1" fill="#555"/><rect x="6" y="212" width="2" height="1" fill="#555"/><rect x="5" y="221" width="5" height="1" fill="#555"/><rect x="6" y="229" width="2" height="1" fill="#555"/><rect x="6" y="237" width="2" height="1" fill="#555"/><rect x="6" y="246" width="2" height="1" fill="#555"/><rect x="6" y="262" width="2" height="1" fill="#555"/><rect x="6" y="271" width="2" height="1" fill="#555"/><rect x="6" y="279" width="2" height="1" fill="#555"/><rect x="5" y="287" width="5" height="1" fill="#555"/><rect x="6" y="296" width="2" height="1" fill="#555"/><rect x="6" y="304" width="2" height="1" fill="#555"/><rect x="6" y="313" width="2" height="1" fill="#555"/><rect x="6" y="329" width="2" height="1" fill="#555"/><rect x="6" y="338" width="2" height="1" fill="#555"/><rect x="6" y="346" width="2" height="1" fill="#555"/><rect x="5" y="355" width="5" height="1" fill="#555"/><rect x="6" y="363" width="2" height="1" fill="#555"/><rect x="6" y="371" width="2" height="1" fill="#555"/><rect x="6" y="380" width="2" height="1" fill="#555"/><rect x="6" y="396" width="2" height="1" fill="#555"/><rect x="6" y="405" width="2" height="1" fill="#555"/><rect x="6" y="413" width="2" height="1" fill="#555"/><rect x="5" y="421" width="5" height="1" fill="#555"/><rect x="6" y="430" width="2" height="1" fill="#555"/><rect x="6" y="438" width="2" height="1" fill="#555"/><rect x="6" y="447" width="2" height="1" fill="#555"/><rect x="6" y="463" width="2" height="1" fill="#555"/><rect x="6" y="472" width="2" height="1" fill="#555"/><rect x="6" y="480" width="2" height="1" fill="#555"/><rect x="5" y="489" width="5" height="1" fill="#555"/><rect x="6" y="497" width="2" height="1" fill="#555"/><rect x="6" y="505" width="2" height="1" fill="#555"/><rect x="6" y="514" width="2" height="1" fill="#555"/><rect x="6" y="530" width="2" height="1" fill="#555"/><rect x="6" y="539" width="2" height="1" fill="#555"/><rect x="6" y="547" width="2" height="1" fill="#555"/><rect x="5" y="555" width="5" height="1" fill="#555"/><rect x="6" y="564" width="2" height="1" fill="#555"/><rect x="6" y="572" width="2" height="1" fill="#555"/><rect x="6" y="581" width="2" height="1" fill="#555"/><rect x="6" y="597" width="2" height="1" fill="#555"/><rect x="6" y="606" width="2" height="1" fill="#555"/><rect x="6" y="614" width="2" height="1" fill="#555"/><rect x="5" y="623" width="5" height="1" fill="#555"/><rect x="6" y="631" width="2" height="1" fill="#555"/><rect x="6" y="639" width="2" height="1" fill="#555"/><rect x="6" y="648" width="2" height="1" fill="#555"/><rect x="6" y="664" width="2" height="1" fill="#555"/><rect x="6" y="673" width="2" height="1" fill="#555"/><rect x="6" y="681" width="2" height="1" fill="#555"/><rect x="5" y="689" width="5" height="1" fill="#555"/><rect x="6" y="698" width="2" height="1" fill="#555"/><rect x="6" y="706" width="2" height="1" fill="#555"/><rect x="6" y="715" width="2" height="1" fill="#555"/><rect x="6" y="731" width="2" height="1" fill="#555"/><rect x="6" y="740" width="2" height="1" fill="#555"/><rect x="6" y="748" width="2" height="1" fill="#555"/><rect x="5" y="757" width="5" height="1" fill="#555"/><rect x="6" y="765" width="2" height="1" fill="#555"/><rect x="6" y="773" width="2" height="1" fill="#555"/><rect x="6" y="782" width="2" height="1" fill="#555"/></svg>
<svg style="left:6px;top:205px;" width="11" height="785" viewBox="0 0 11 785"><text transform="translate(9.8,120.0) rotate(-90)" text-anchor="middle" font-size="9.5" fill="#444" font-family="Liberation Sans">1</text><text transform="translate(9.8,187.0) rotate(-90)" text-anchor="middle" font-size="9.5" fill="#444" font-family="Liberation Sans">2</text><text transform="translate(9.8,254.0) rotate(-90)" text-anchor="middle" font-size="9.5" fill="#444" font-family="Liberation Sans">3</text><text transform="translate(9.8,321.0) rotate(-90)" text-anchor="middle" font-size="9.5" fill="#444" font-family="Liberation Sans">4</text><text transform="translate(9.8,388.0) rotate(-90)" text-anchor="middle" font-size="9.5" fill="#444" font-family="Liberation Sans">5</text><text transform="translate(9.8,455.0) rotate(-90)" text-anchor="middle" font-size="9.5" fill="#444" font-family="Liberation Sans">6</text><text transform="translate(9.8,522.0) rotate(-90)" text-anchor="middle" font-size="9.5" fill="#444" font-family="Liberation Sans">7</text><text transform="translate(9.8,589.0) rotate(-90)" text-anchor="middle" font-size="9.5" fill="#444" font-family="Liberation Sans">8</text><text transform="translate(9.8,656.0) rotate(-90)" text-anchor="middle" font-size="9.5" fill="#444" font-family="Liberation Sans">9</text><text transform="translate(9.8,723.0) rotate(-90)" text-anchor="middle" font-size="9.5" fill="#444" font-family="Liberation Sans">10</text></svg>
<div style="left:57px;top:206px;width:553px;height:783px;background:#fff;border:1px solid #c6c6c6"></div>
<div style="left:622px;top:206px;width:553px;height:783px;background:#fff;border:1px solid #c6c6c6"></div>
<span id="t73" class="t ts" style="left:136px;top:240.00px;font-size:12.3px;color:#777777;letter-spacing:-0.434px;">Hello World!</span>
<span id="t74" class="t ts" style="left:136px;top:260.00px;font-size:12.3px;color:#1c1c1c;letter-spacing:-0.434px;">Hello World!</span>
<span id="t75" class="t ts" style="left:136px;top:944.00px;font-size:12.3px;color:#777777;letter-spacing:-0.435px;">Hello Word!</span>
<span id="t76" class="t ts" style="left:701px;top:240.00px;font-size:12.3px;color:#777777;letter-spacing:-0.434px;">Hello World!</span>
<span id="t77" class="t ts" style="left:701px;top:944.00px;font-size:12.3px;color:#777777;letter-spacing:-0.435px;">Hello Word!</span>
<svg style="left:701px;top:259px;overflow:hidden" width="222" height="551" viewBox="0 0 222 551"><defs><linearGradient id="sky" x1="0" y1="0" x2="0" y2="1"><stop offset="0" stop-color="#f5e3d4"/><stop offset="0.02" stop-color="#f9e5d5"/><stop offset="0.107" stop-color="#fee6d4"/><stop offset="0.31" stop-color="#fde9d1"/><stop offset="0.49" stop-color="#fee0b8"/><stop offset="0.60" stop-color="#fdcf9b"/><stop offset="0.69" stop-color="#febc85"/><stop offset="0.80" stop-color="#fcab7e"/><stop offset="1" stop-color="#f2a382"/></linearGradient><linearGradient id="tw" x1="0" y1="0" x2="1" y2="0"><stop offset="0" stop-color="#4e382e"/><stop offset="0.5" stop-color="#4e3426"/><stop offset="0.505" stop-color="#8c5634"/><stop offset="1" stop-color="#9c6640"/></linearGradient><linearGradient id="sh" gradientUnits="userSpaceOnUse" x1="70" y1="0" x2="150" y2="0"><stop offset="0" stop-color="#3a2418"/><stop offset="0.5" stop-color="#3a2418"/><stop offset="0.52" stop-color="#9a5428"/><stop offset="1" stop-color="#7a4220"/></linearGradient><pattern id="lat" width="9" height="9" patternUnits="userSpaceOnUse" x="2"><path d="M0 0 L9 9 M9 0 L0 9 M0 0 H9 M0 0 V9" stroke="url(#sh)" stroke-width="1.5" fill="none"/></pattern><pattern id="latd" width="9" height="9" patternUnits="userSpaceOnUse" x="2"><path d="M0 0 L9 9 M9 0 L0 9 M0 0 H9 M0 0 V9" stroke="#432a1c" stroke-width="1.25" fill="none"/></pattern><pattern id="latl" width="9" height="9" patternUnits="userSpaceOnUse" x="2"><path d="M0 0 L9 9 M9 0 L0 9 M0 0 H9 M0 0 V9" stroke="#7a4a2a" stroke-width="1.25" fill="none"/></pattern><pattern id="l2d" width="6" height="7" patternUnits="userSpaceOnUse"><path d="M0 0 L6 7 M6 0 L0 7 M0 0 H6" stroke="#33221a" stroke-width="1.5" fill="none"/></pattern><pattern id="l2l" width="6" height="7" patternUnits="userSpaceOnUse"><path d="M0 0 L6 7 M6 0 L0 7 M0 0 H6" stroke="#6e3c1e" stroke-width="1.5" fill="none"/></pattern></defs><rect width="222" height="551" fill="url(#sky)"/><path d="M0 458 L6 458 L8 451 L12 451 L12 445 L22 445 L24 450 L36 452 L38 456 L52 458 L60 455 L75 458 L90 455 L110 457 L130 454 L150 457 L160 453 L165 448 L168 441 L176 441 L178 446 L186 446 L190 441 L204 441 L206 445 L214 444 L216 448 L222 448 V551 H0 Z" fill="#cb9c82"/><rect x="123" y="464" width="12" height="5" fill="#e6b898"/><rect x="39" y="479" width="11" height="5" fill="#dfab8a"/><rect x="65" y="450" width="4" height="7" fill="#cf9d82"/><rect x="86" y="469" width="8" height="6" fill="#dfab8a"/><rect x="184" y="470" width="4" height="2" fill="#e9b692"/><rect x="172" y="469" width="6" height="6" fill="#e9b692"/><rect x="141" y="466" width="8" height="6" fill="#d9a78c"/><rect x="88" y="471" width="9" height="8" fill="#c0917a"/><rect x="67" y="473" width="5" height="4" fill="#c0917a"/><rect x="20" y="468" width="4" height="4" fill="#c0917a"/><rect x="187" y="482" width="3" height="3" fill="#cf9d82"/><rect x="218" y="464" width="7" height="2" fill="#e9b692"/><rect x="57" y="476" width="4" height="4" fill="#c8997f"/><rect x="23" y="475" width="5" height="3" fill="#cf9d82"/><rect x="106" y="464" width="10" height="3" fill="#e6b898"/><rect x="161" y="454" width="4" height="6" fill="#c0917a"/><rect x="220" y="462" width="3" height="7" fill="#b38a78"/><rect x="0" y="484" width="5" height="8" fill="#c0917a"/><rect x="29" y="449" width="7" height="2" fill="#d6a486"/><rect x="83" y="478" width="4" height="3" fill="#e9b692"/><rect x="79" y="448" width="9" height="3" fill="#d9a78c"/><rect x="27" y="478" width="7" height="6" fill="#b38a78"/><rect x="181" y="481" width="5" height="3" fill="#e6b898"/><rect x="211" y="454" width="12" height="6" fill="#c8997f"/><rect x="21" y="449" width="8" height="4" fill="#c8997f"/><rect x="182" y="457" width="9" height="4" fill="#dfab8a"/><rect x="217" y="481" width="4" height="5" fill="#c0917a"/><rect x="203" y="457" width="5" height="2" fill="#b38a78"/><rect x="52" y="462" width="3" height="4" fill="#e6b898"/><rect x="26" y="468" width="7" height="7" fill="#d6a486"/><rect x="152" y="471" width="9" height="3" fill="#cf9d82"/><rect x="103" y="481" width="7" height="4" fill="#cf9d82"/><rect x="140" y="448" width="8" height="6" fill="#d6a486"/><rect x="12" y="452" width="8" height="4" fill="#cf9d82"/><rect x="163" y="480" width="10" height="7" fill="#d6a486"/><rect x="151" y="460" width="12" height="7" fill="#c8997f"/><rect x="3" y="482" width="8" height="2" fill="#c8997f"/><rect x="-1" y="461" width="4" height="3" fill="#c0917a"/><rect x="195" y="484" width="10" height="4" fill="#d9a78c"/><rect x="185" y="463" width="4" height="7" fill="#cf9d82"/><rect x="16" y="458" width="3" height="8" fill="#c0917a"/><rect x="135" y="465" width="12" height="4" fill="#cf9d82"/><rect x="28" y="461" width="9" height="5" fill="#d6a486"/><rect x="96" y="471" width="12" height="4" fill="#b38a78"/><rect x="93" y="454" width="11" height="7" fill="#e9b692"/><rect x="128" y="461" width="6" height="3" fill="#d9a78c"/><rect x="198" y="460" width="3" height="2" fill="#b38a78"/><rect x="21" y="477" width="8" height="8" fill="#c8997f"/><rect x="114" y="461" width="10" height="6" fill="#d9a78c"/><rect x="183" y="459" width="6" height="6" fill="#b38a78"/><rect x="66" y="468" width="11" height="2" fill="#dfab8a"/><rect x="39" y="462" width="11" height="4" fill="#dfab8a"/><rect x="218" y="476" width="4" height="3" fill="#e6b898"/><rect x="178" y="471" width="13" height="6" fill="#e9b692"/><rect x="54" y="477" width="10" height="7" fill="#e6b898"/><rect x="36" y="473" width="6" height="4" fill="#e6b898"/><rect x="221" y="466" width="5" height="7" fill="#e9b692"/><rect x="207" y="450" width="10" height="3" fill="#d9a78c"/><rect x="197" y="454" width="3" height="5" fill="#e6b898"/><rect x="209" y="476" width="8" height="6" fill="#e9b692"/><rect x="192" y="451" width="11" height="8" fill="#c0917a"/><rect x="199" y="455" width="13" height="8" fill="#e6b898"/><rect x="207" y="483" width="6" height="6" fill="#cf9d82"/><rect x="15" y="460" width="7" height="5" fill="#b38a78"/><rect x="2" y="465" width="11" height="2" fill="#cf9d82"/><rect x="72" y="453" width="11" height="3" fill="#dfab8a"/><rect x="200" y="484" width="8" height="6" fill="#d9a78c"/><rect x="107" y="482" width="12" height="3" fill="#e9b692"/><rect x="122" y="463" width="11" height="5" fill="#dfab8a"/><rect x="187" y="466" width="9" height="4" fill="#c8997f"/><rect x="193" y="482" width="9" height="4" fill="#dfab8a"/><rect x="114" y="483" width="9" height="3" fill="#e6b898"/><rect x="-3" y="451" width="7" height="5" fill="#cf9d82"/><rect x="87" y="466" width="11" height="5" fill="#d9a78c"/><rect x="34" y="450" width="12" height="5" fill="#c8997f"/><rect x="103" y="457" width="4" height="5" fill="#d9a78c"/><rect x="21" y="466" width="7" height="2" fill="#b38a78"/><rect x="172" y="452" width="3" height="3" fill="#e9b692"/><rect x="60" y="447" width="10" height="3" fill="#d9a78c"/><rect x="161" y="451" width="4" height="5" fill="#b38a78"/><rect x="155" y="474" width="12" height="2" fill="#c8997f"/><rect x="135" y="478" width="8" height="7" fill="#e6b898"/><rect x="116" y="471" width="12" height="6" fill="#dfab8a"/><rect x="163" y="456" width="11" height="7" fill="#d6a486"/><rect x="197" y="469" width="5" height="7" fill="#e9b692"/><rect x="26" y="480" width="5" height="6" fill="#b38a78"/><rect x="94" y="461" width="12" height="5" fill="#dfab8a"/><rect x="138" y="454" width="11" height="3" fill="#d6a486"/><rect x="215" y="481" width="4" height="5" fill="#d6a486"/><rect x="151" y="466" width="5" height="2" fill="#c0917a"/><rect x="168" y="448" width="9" height="7" fill="#d9a78c"/><rect x="38" y="452" width="5" height="7" fill="#b38a78"/><rect x="18" y="481" width="4" height="8" fill="#d9a78c"/><rect x="18" y="450" width="7" height="5" fill="#d6a486"/><rect x="132" y="463" width="3" height="6" fill="#e9b692"/><rect x="99" y="454" width="10" height="4" fill="#e9b692"/><rect x="17" y="469" width="11" height="4" fill="#c0917a"/><rect x="155" y="477" width="12" height="6" fill="#c8997f"/><rect x="39" y="468" width="9" height="4" fill="#b38a78"/><rect x="22" y="457" width="10" height="3" fill="#c8997f"/><rect x="71" y="452" width="8" height="4" fill="#c8997f"/><rect x="88" y="475" width="10" height="2" fill="#d6a486"/><rect x="19" y="458" width="12" height="8" fill="#cf9d82"/><rect x="209" y="456" width="10" height="4" fill="#c8997f"/><rect x="116" y="468" width="7" height="8" fill="#e9b692"/><rect x="168" y="473" width="13" height="2" fill="#c0917a"/><rect x="54" y="474" width="7" height="2" fill="#e9b692"/><rect x="-2" y="471" width="6" height="4" fill="#d6a486"/><rect x="111" y="467" width="13" height="5" fill="#c0917a"/><rect x="179" y="471" width="4" height="6" fill="#cf9d82"/><rect x="208" y="461" width="7" height="8" fill="#d9a78c"/><rect x="131" y="467" width="7" height="5" fill="#b38a78"/><rect x="131" y="466" width="7" height="4" fill="#b38a78"/><rect x="60" y="468" width="10" height="4" fill="#cf9d82"/><rect x="128" y="476" width="9" height="4" fill="#c8997f"/><rect x="67" y="449" width="7" height="5" fill="#d6a486"/><rect x="201" y="450" width="7" height="5" fill="#e9b692"/><rect x="18" y="449" width="11" height="7" fill="#dfab8a"/><rect x="181" y="483" width="9" height="3" fill="#c8997f"/><rect x="42" y="464" width="4" height="5" fill="#c0917a"/><rect x="28" y="460" width="7" height="6" fill="#c8997f"/><rect x="164" y="460" width="11" height="3" fill="#b38a78"/><rect x="50" y="474" width="4" height="7" fill="#e6b898"/><rect x="77" y="470" width="6" height="6" fill="#e9b692"/><rect x="166" y="470" width="5" height="3" fill="#e9b692"/><rect x="5" y="480" width="4" height="4" fill="#c8997f"/><rect x="5" y="448" width="5" height="4" fill="#c0917a"/><rect x="32" y="481" width="5" height="8" fill="#d9a78c"/><rect x="44" y="465" width="6" height="6" fill="#c0917a"/><rect x="97" y="477" width="11" height="7" fill="#e9b692"/><rect x="165" y="463" width="7" height="3" fill="#dfab8a"/><rect x="220" y="471" width="6" height="5" fill="#dfab8a"/><rect x="79" y="463" width="4" height="7" fill="#c0917a"/><rect x="94" y="467" width="9" height="7" fill="#d9a78c"/><rect x="171" y="458" width="4" height="3" fill="#c0917a"/><rect x="108" y="473" width="11" height="4" fill="#dfab8a"/><rect x="145" y="455" width="6" height="7" fill="#d6a486"/><rect x="125" y="473" width="12" height="8" fill="#b38a78"/><rect x="177" y="463" width="6" height="4" fill="#c8997f"/><rect x="161" y="483" width="8" height="3" fill="#d6a486"/><rect x="149" y="448" width="9" height="7" fill="#d6a486"/><rect x="118" y="476" width="11" height="5" fill="#dfab8a"/><rect x="99" y="450" width="12" height="7" fill="#e9b692"/><rect x="119" y="466" width="9" height="8" fill="#c8997f"/><rect x="120" y="449" width="11" height="3" fill="#c0917a"/><rect x="20" y="457" width="6" height="2" fill="#dfab8a"/><rect x="180" y="451" width="7" height="6" fill="#d9a78c"/><rect x="114" y="475" width="11" height="4" fill="#d6a486"/><rect x="71" y="477" width="4" height="5" fill="#c0917a"/><rect x="203" y="473" width="7" height="7" fill="#d6a486"/><rect x="178" y="479" width="11" height="7" fill="#e6b898"/><rect x="114" y="471" width="10" height="7" fill="#c8997f"/><rect x="203" y="481" width="5" height="3" fill="#c8997f"/><rect x="69" y="472" width="7" height="5" fill="#b38a78"/><rect x="9" y="483" width="6" height="3" fill="#dfab8a"/><rect x="37" y="476" width="4" height="5" fill="#d9a78c"/><rect x="4" y="481" width="4" height="3" fill="#e9b692"/><rect x="132" y="469" width="8" height="5" fill="#d9a78c"/><rect x="60" y="454" width="5" height="7" fill="#b38a78"/><rect x="209" y="470" width="9" height="7" fill="#d9a78c"/><rect x="203" y="480" width="6" height="5" fill="#c0917a"/><rect x="46" y="465" width="3" height="8" fill="#c8997f"/><rect x="176" y="483" width="11" height="7" fill="#cf9d82"/><rect x="50" y="471" width="3" height="5" fill="#d6a486"/><rect x="52" y="464" width="7" height="7" fill="#c8997f"/><rect x="69" y="453" width="6" height="7" fill="#e6b898"/><rect x="164" y="452" width="9" height="5" fill="#cf9d82"/><rect x="170" y="453" width="3" height="7" fill="#dfab8a"/><rect x="15" y="477" width="6" height="6" fill="#c0917a"/><rect x="153" y="480" width="4" height="6" fill="#e6b898"/><rect x="65" y="479" width="11" height="5" fill="#c0917a"/><rect x="95" y="476" width="3" height="4" fill="#d9a78c"/><rect x="184" y="453" width="6" height="4" fill="#c0917a"/><rect x="221" y="468" width="10" height="2" fill="#c0917a"/><rect x="20" y="472" width="7" height="5" fill="#c0917a"/><rect x="-1" y="471" width="7" height="6" fill="#e9b692"/><rect x="22" y="458" width="11" height="7" fill="#e9b692"/><rect x="30" y="480" width="9" height="8" fill="#b38a78"/><rect x="167" y="482" width="9" height="3" fill="#e9b692"/><rect x="161" y="454" width="6" height="8" fill="#d9a78c"/><rect x="71" y="474" width="11" height="3" fill="#dfab8a"/><rect x="26" y="470" width="9" height="3" fill="#e9b692"/><rect x="185" y="462" width="9" height="3" fill="#e9b692"/><rect x="219" y="448" width="7" height="7" fill="#d6a486"/><rect x="93" y="481" width="8" height="6" fill="#dfab8a"/><rect x="83" y="477" width="6" height="4" fill="#cf9d82"/><rect x="135" y="474" width="6" height="7" fill="#e9b692"/><rect x="134" y="471" width="3" height="4" fill="#d6a486"/><rect x="96" y="458" width="9" height="3" fill="#d6a486"/><rect x="182" y="476" width="9" height="3" fill="#e6b898"/><rect x="120" y="480" width="7" height="5" fill="#dfab8a"/><rect x="41" y="468" width="12" height="8" fill="#e9b692"/><rect x="2" y="468" width="10" height="7" fill="#dfab8a"/><rect x="126" y="456" width="10" height="4" fill="#d6a486"/><rect x="196" y="457" width="8" height="6" fill="#e9b692"/><rect x="119" y="480" width="9" height="5" fill="#b38a78"/><rect x="165" y="453" width="12" height="4" fill="#dfab8a"/><rect x="182" y="452" width="6" height="7" fill="#e9b692"/><rect x="78" y="475" width="5" height="6" fill="#c0917a"/><rect x="87" y="464" width="11" height="8" fill="#dfab8a"/><rect x="148" y="489" width="9" height="4" fill="#c9a68e"/><rect x="169" y="505" width="4" height="4" fill="#cfa281"/><rect x="83" y="481" width="8" height="3" fill="#7e6052"/><rect x="51" y="480" width="10" height="2" fill="#cfa281"/><rect x="174" y="509" width="6" height="4" fill="#b88c70"/><rect x="89" y="497" width="8" height="5" fill="#a88068"/><rect x="106" y="510" width="11" height="5" fill="#e8c4a0"/><rect x="94" y="494" width="8" height="6" fill="#7e6052"/><rect x="114" y="490" width="6" height="2" fill="#cfa281"/><rect x="135" y="488" width="6" height="4" fill="#dcae8a"/><rect x="65" y="510" width="8" height="2" fill="#b88c70"/><rect x="51" y="515" width="10" height="6" fill="#e4ba96"/><rect x="115" y="507" width="5" height="3" fill="#a88068"/><rect x="195" y="519" width="11" height="5" fill="#f0d4b4"/><rect x="119" y="492" width="8" height="3" fill="#f0d4b4"/><rect x="124" y="510" width="10" height="2" fill="#ecc9a8"/><rect x="117" y="480" width="11" height="2" fill="#f4e0c6"/><rect x="1" y="509" width="4" height="4" fill="#e4ba96"/><rect x="86" y="513" width="6" height="4" fill="#cfa281"/><rect x="99" y="489" width="6" height="3" fill="#ecc9a8"/><rect x="217" y="519" width="7" height="3" fill="#927260"/><rect x="153" y="515" width="3" height="3" fill="#dcae8a"/><rect x="-0" y="517" width="8" height="5" fill="#7e6052"/><rect x="139" y="484" width="5" height="6" fill="#cfa281"/><rect x="65" y="505" width="10" height="6" fill="#927260"/><rect x="157" y="516" width="4" height="5" fill="#e4ba96"/><rect x="34" y="494" width="10" height="2" fill="#e8c4a0"/><rect x="37" y="483" width="5" height="5" fill="#927260"/><rect x="146" y="492" width="10" height="4" fill="#f4e0c6"/><rect x="198" y="521" width="4" height="3" fill="#ecc9a8"/><rect x="16" y="505" width="11" height="4" fill="#7e6052"/><rect x="201" y="478" width="3" height="4" fill="#7e6052"/><rect x="178" y="486" width="4" height="3" fill="#f4e0c6"/><rect x="59" y="486" width="7" height="3" fill="#ecc9a8"/><rect x="4" y="521" width="7" height="5" fill="#a88068"/><rect x="197" y="474" width="3" height="2" fill="#f0d4b4"/><rect x="69" y="518" width="7" height="2" fill="#927260"/><rect x="187" y="498" width="8" height="4" fill="#7e6052"/><rect x="172" y="482" width="4" height="4" fill="#f4e0c6"/><rect x="120" y="506" width="5" height="5" fill="#e8c4a0"/><rect x="107" y="485" width="5" height="4" fill="#e4ba96"/><rect x="42" y="487" width="11" height="2" fill="#e4ba96"/><rect x="37" y="516" width="4" height="2" fill="#e4ba96"/><rect x="110" y="513" width="9" height="5" fill="#cfa281"/><rect x="201" y="477" width="8" height="4" fill="#e8c4a0"/><rect x="29" y="485" width="5" height="2" fill="#dcae8a"/><rect x="163" y="513" width="9" height="5" fill="#e4ba96"/><rect x="181" y="478" width="4" height="3" fill="#ecc9a8"/><rect x="145" y="498" width="8" height="4" fill="#dcae8a"/><rect x="78" y="494" width="5" height="6" fill="#cfa281"/><rect x="167" y="480" width="8" height="3" fill="#e8c4a0"/><rect x="164" y="496" width="3" height="3" fill="#7e6052"/><rect x="85" y="481" width="5" height="4" fill="#b88c70"/><rect x="150" y="521" width="9" height="6" fill="#c9a68e"/><rect x="53" y="485" width="7" height="3" fill="#e4ba96"/><rect x="47" y="478" width="5" height="6" fill="#c9a68e"/><rect x="32" y="484" width="8" height="6" fill="#e8c4a0"/><rect x="153" y="490" width="10" height="4" fill="#ecc9a8"/><rect x="85" y="496" width="10" height="4" fill="#cfa281"/><rect x="75" y="484" width="4" height="4" fill="#ecc9a8"/><rect x="86" y="497" width="8" height="5" fill="#e4ba96"/><rect x="220" y="495" width="8" height="5" fill="#f4e0c6"/><rect x="91" y="500" width="3" height="3" fill="#927260"/><rect x="113" y="504" width="9" height="4" fill="#c9a68e"/><rect x="158" y="518" width="5" height="3" fill="#ecc9a8"/><rect x="172" y="509" width="4" height="3" fill="#b88c70"/><rect x="69" y="475" width="6" height="2" fill="#a88068"/><rect x="170" y="490" width="7" height="2" fill="#a88068"/><rect x="106" y="503" width="5" height="4" fill="#ecc9a8"/><rect x="67" y="476" width="6" height="4" fill="#ecc9a8"/><rect x="120" y="499" width="6" height="4" fill="#a88068"/><rect x="42" y="481" width="5" height="5" fill="#a88068"/><rect x="113" y="481" width="6" height="2" fill="#dcae8a"/><rect x="45" y="491" width="3" height="2" fill="#f0d4b4"/><rect x="-1" y="497" width="9" height="5" fill="#f0d4b4"/><rect x="204" y="506" width="5" height="5" fill="#f0d4b4"/><rect x="171" y="480" width="6" height="5" fill="#927260"/><rect x="93" y="478" width="6" height="2" fill="#a88068"/><rect x="60" y="519" width="9" height="3" fill="#a88068"/><rect x="170" y="484" width="6" height="5" fill="#7e6052"/><rect x="73" y="478" width="6" height="3" fill="#c9a68e"/><rect x="189" y="486" width="5" height="6" fill="#a88068"/><rect x="202" y="480" width="10" height="3" fill="#a88068"/><rect x="128" y="498" width="7" height="3" fill="#927260"/><rect x="4" y="477" width="6" height="3" fill="#927260"/><rect x="147" y="487" width="4" height="4" fill="#c9a68e"/><rect x="199" y="490" width="3" height="5" fill="#f4e0c6"/><rect x="138" y="511" width="8" height="4" fill="#a88068"/><rect x="11" y="477" width="7" height="4" fill="#a88068"/><rect x="27" y="476" width="7" height="3" fill="#dcae8a"/><rect x="1" y="497" width="8" height="3" fill="#927260"/><rect x="49" y="507" width="3" height="4" fill="#a88068"/><rect x="120" y="474" width="10" height="5" fill="#b88c70"/><rect x="123" y="504" width="10" height="6" fill="#dcae8a"/><rect x="19" y="487" width="3" height="5" fill="#f4e0c6"/><rect x="151" y="507" width="11" height="5" fill="#ecc9a8"/><rect x="152" y="490" width="9" height="3" fill="#a88068"/><rect x="165" y="488" width="7" height="3" fill="#f4e0c6"/><rect x="156" y="491" width="10" height="5" fill="#b88c70"/><rect x="181" y="521" width="10" height="3" fill="#e4ba96"/><rect x="150" y="499" width="3" height="4" fill="#a88068"/><rect x="8" y="516" width="5" height="4" fill="#e8c4a0"/><rect x="158" y="493" width="5" height="5" fill="#dcae8a"/><rect x="189" y="483" width="5" height="4" fill="#ecc9a8"/><rect x="91" y="501" width="9" height="4" fill="#927260"/><rect x="24" y="512" width="6" height="5" fill="#f4e0c6"/><rect x="216" y="505" width="7" height="5" fill="#ecc9a8"/><rect x="57" y="487" width="5" height="5" fill="#a88068"/><rect x="219" y="519" width="3" height="5" fill="#b88c70"/><rect x="40" y="516" width="6" height="4" fill="#b88c70"/><rect x="200" y="493" width="10" height="5" fill="#ecc9a8"/><rect x="66" y="492" width="9" height="5" fill="#927260"/><rect x="159" y="485" width="6" height="3" fill="#c9a68e"/><rect x="153" y="493" width="7" height="5" fill="#ecc9a8"/><rect x="184" y="495" width="7" height="6" fill="#e4ba96"/><rect x="30" y="495" width="10" height="3" fill="#c9a68e"/><rect x="137" y="481" width="5" height="3" fill="#e4ba96"/><rect x="121" y="484" width="7" height="3" fill="#cfa281"/><rect x="66" y="517" width="4" height="3" fill="#e4ba96"/><rect x="174" y="481" width="11" height="4" fill="#cfa281"/><rect x="178" y="494" width="6" height="2" fill="#7e6052"/><rect x="183" y="504" width="5" height="3" fill="#927260"/><rect x="221" y="516" width="7" height="5" fill="#e8c4a0"/><rect x="190" y="476" width="11" height="4" fill="#f0d4b4"/><rect x="77" y="478" width="9" height="3" fill="#7e6052"/><rect x="196" y="496" width="4" height="3" fill="#7e6052"/><rect x="51" y="487" width="10" height="4" fill="#927260"/><rect x="183" y="513" width="9" height="6" fill="#b88c70"/><rect x="105" y="519" width="10" height="4" fill="#c9a68e"/><rect x="126" y="475" width="5" height="4" fill="#dcae8a"/><rect x="59" y="498" width="11" height="5" fill="#e4ba96"/><rect x="59" y="491" width="10" height="3" fill="#b88c70"/><rect x="44" y="487" width="4" height="2" fill="#ecc9a8"/><rect x="150" y="500" width="4" height="2" fill="#ecc9a8"/><rect x="37" y="492" width="3" height="4" fill="#cfa281"/><rect x="69" y="493" width="7" height="6" fill="#f4e0c6"/><rect x="35" y="475" width="4" height="4" fill="#c9a68e"/><rect x="93" y="521" width="11" height="3" fill="#a88068"/><rect x="197" y="511" width="10" height="2" fill="#a88068"/><rect x="69" y="519" width="4" height="3" fill="#cfa281"/><rect x="139" y="481" width="6" height="5" fill="#f4e0c6"/><rect x="74" y="504" width="7" height="5" fill="#a88068"/><rect x="124" y="498" width="4" height="5" fill="#e8c4a0"/><rect x="95" y="510" width="7" height="5" fill="#7e6052"/><rect x="132" y="485" width="8" height="4" fill="#cfa281"/><rect x="98" y="499" width="5" height="2" fill="#cfa281"/><rect x="30" y="519" width="7" height="6" fill="#e8c4a0"/><rect x="39" y="504" width="7" height="4" fill="#cfa281"/><rect x="25" y="516" width="11" height="4" fill="#f4e0c6"/><rect x="205" y="483" width="9" height="3" fill="#b88c70"/><rect x="112" y="512" width="11" height="2" fill="#cfa281"/><rect x="53" y="508" width="9" height="4" fill="#7e6052"/><rect x="92" y="475" width="7" height="6" fill="#f4e0c6"/><rect x="121" y="478" width="9" height="4" fill="#f4e0c6"/><rect x="108" y="477" width="3" height="5" fill="#b88c70"/><rect x="30" y="512" width="6" height="2" fill="#cfa281"/><rect x="212" y="519" width="5" height="3" fill="#a88068"/><rect x="84" y="483" width="10" height="4" fill="#e4ba96"/><rect x="219" y="477" width="5" height="5" fill="#e8c4a0"/><rect x="123" y="521" width="11" height="4" fill="#dcae8a"/><rect x="187" y="508" width="11" height="5" fill="#f4e0c6"/><rect x="37" y="507" width="4" height="5" fill="#e4ba96"/><rect x="59" y="476" width="5" height="3" fill="#c9a68e"/><rect x="40" y="491" width="11" height="5" fill="#e8c4a0"/><rect x="193" y="508" width="9" height="3" fill="#b88c70"/><rect x="92" y="504" width="10" height="4" fill="#e4ba96"/><rect x="24" y="480" width="4" height="4" fill="#a88068"/><rect x="127" y="485" width="5" height="5" fill="#927260"/><rect x="14" y="520" width="8" height="3" fill="#e4ba96"/><rect x="164" y="493" width="8" height="4" fill="#b88c70"/><rect x="71" y="492" width="8" height="5" fill="#927260"/><rect x="153" y="488" width="8" height="3" fill="#a88068"/><rect x="130" y="492" width="10" height="4" fill="#927260"/><rect x="181" y="490" width="10" height="4" fill="#7e6052"/><rect x="98" y="506" width="5" height="5" fill="#cfa281"/><rect x="159" y="492" width="8" height="3" fill="#cfa281"/><rect x="31" y="506" width="4" height="3" fill="#7e6052"/><rect x="148" y="489" width="8" height="6" fill="#cfa281"/><rect x="85" y="522" width="10" height="5" fill="#e8c4a0"/><rect x="9" y="479" width="11" height="5" fill="#f0d4b4"/><rect x="113" y="519" width="8" height="4" fill="#ecc9a8"/><rect x="18" y="499" width="9" height="2" fill="#f0d4b4"/><rect x="174" y="507" width="10" height="5" fill="#e8c4a0"/><rect x="196" y="497" width="6" height="3" fill="#dcae8a"/><rect x="209" y="515" width="10" height="2" fill="#dcae8a"/><rect x="123" y="494" width="11" height="5" fill="#b88c70"/><rect x="111" y="488" width="4" height="4" fill="#ecc9a8"/><rect x="111" y="506" width="5" height="3" fill="#f4e0c6"/><rect x="90" y="486" width="3" height="3" fill="#e4ba96"/><rect x="20" y="482" width="4" height="6" fill="#7e6052"/><rect x="215" y="481" width="7" height="4" fill="#c9a68e"/><rect x="157" y="520" width="4" height="5" fill="#f4e0c6"/><rect x="181" y="481" width="9" height="5" fill="#ecc9a8"/><rect x="136" y="488" width="6" height="4" fill="#7e6052"/><rect x="188" y="505" width="3" height="4" fill="#b88c70"/><rect x="117" y="484" width="8" height="4" fill="#e4ba96"/><rect x="220" y="484" width="7" height="3" fill="#7e6052"/><rect x="18" y="518" width="8" height="3" fill="#c9a68e"/><rect x="79" y="486" width="6" height="4" fill="#dcae8a"/><rect x="71" y="505" width="4" height="3" fill="#7e6052"/><rect x="115" y="477" width="7" height="4" fill="#f4e0c6"/><rect x="157" y="506" width="3" height="3" fill="#f4e0c6"/><rect x="115" y="499" width="9" height="3" fill="#c9a68e"/><rect x="-2" y="520" width="8" height="6" fill="#dcae8a"/><rect x="153" y="520" width="10" height="3" fill="#c9a68e"/><rect x="38" y="477" width="4" height="5" fill="#dcae8a"/><rect x="17" y="477" width="5" height="3" fill="#a88068"/><rect x="80" y="505" width="4" height="4" fill="#b88c70"/><rect x="218" y="478" width="10" height="3" fill="#dcae8a"/><rect x="31" y="481" width="5" height="3" fill="#e4ba96"/><rect x="137" y="476" width="7" height="6" fill="#f0d4b4"/><rect x="135" y="508" width="8" height="3" fill="#7e6052"/><rect x="163" y="474" width="6" height="5" fill="#b88c70"/><rect x="15" y="482" width="8" height="3" fill="#e4ba96"/><rect x="177" y="507" width="7" height="6" fill="#e8c4a0"/><rect x="22" y="477" width="10" height="5" fill="#7e6052"/><rect x="155" y="508" width="6" height="5" fill="#f0d4b4"/><rect x="204" y="501" width="5" height="4" fill="#7e6052"/><rect x="210" y="481" width="4" height="3" fill="#a88068"/><rect x="94" y="476" width="6" height="5" fill="#e4ba96"/><rect x="152" y="498" width="6" height="5" fill="#b88c70"/><rect x="189" y="500" width="9" height="3" fill="#cfa281"/><rect x="33" y="491" width="6" height="4" fill="#7e6052"/><rect x="98" y="507" width="8" height="4" fill="#c9a68e"/><rect x="155" y="481" width="6" height="2" fill="#e4ba96"/><rect x="55" y="485" width="9" height="4" fill="#927260"/><rect x="177" y="518" width="5" height="3" fill="#f4e0c6"/><rect x="136" y="495" width="7" height="6" fill="#7e6052"/><rect x="106" y="496" width="5" height="5" fill="#b88c70"/><rect x="109" y="507" width="4" height="6" fill="#dcae8a"/><rect x="121" y="501" width="6" height="3" fill="#dcae8a"/><rect x="18" y="513" width="9" height="3" fill="#f4e0c6"/><rect x="163" y="515" width="6" height="3" fill="#f4e0c6"/><rect x="199" y="502" width="10" height="5" fill="#dcae8a"/><rect x="174" y="479" width="9" height="4" fill="#e8c4a0"/><rect x="21" y="521" width="6" height="3" fill="#927260"/><rect x="61" y="506" width="7" height="3" fill="#b88c70"/><rect x="60" y="487" width="5" height="4" fill="#a88068"/><rect x="190" y="482" width="10" height="4" fill="#7e6052"/><rect x="33" y="512" width="9" height="5" fill="#c9a68e"/><rect x="55" y="511" width="3" height="6" fill="#dcae8a"/><rect x="119" y="505" width="7" height="5" fill="#dcae8a"/><rect x="209" y="509" width="7" height="4" fill="#dcae8a"/><rect x="13" y="517" width="7" height="4" fill="#f0d4b4"/><rect x="64" y="510" width="3" height="6" fill="#b88c70"/><rect x="79" y="483" width="6" height="3" fill="#f0d4b4"/><rect x="28" y="506" width="6" height="3" fill="#f0d4b4"/><rect x="216" y="521" width="10" height="4" fill="#a88068"/><rect x="38" y="499" width="7" height="3" fill="#e4ba96"/><rect x="195" y="518" width="4" height="3" fill="#f4e0c6"/><rect x="106" y="478" width="7" height="6" fill="#7e6052"/><rect x="199" y="478" width="5" height="3" fill="#927260"/><rect x="217" y="519" width="11" height="6" fill="#a88068"/><rect x="1" y="519" width="7" height="4" fill="#f0d4b4"/><rect x="199" y="501" width="6" height="3" fill="#7e6052"/><rect x="202" y="482" width="4" height="3" fill="#927260"/><rect x="1" y="520" width="3" height="5" fill="#e8c4a0"/><rect x="187" y="503" width="9" height="5" fill="#b88c70"/><rect x="11" y="474" width="9" height="6" fill="#f4e0c6"/><rect x="72" y="494" width="6" height="2" fill="#f4e0c6"/><rect x="128" y="487" width="7" height="3" fill="#f0d4b4"/><rect x="143" y="491" width="10" height="4" fill="#f4e0c6"/><rect x="53" y="481" width="7" height="5" fill="#dcae8a"/><rect x="149" y="483" width="8" height="4" fill="#c9a68e"/><rect x="194" y="486" width="4" height="3" fill="#927260"/><rect x="163" y="498" width="5" height="2" fill="#f4e0c6"/><rect x="14" y="500" width="9" height="3" fill="#f4e0c6"/><rect x="122" y="476" width="4" height="5" fill="#b88c70"/><rect x="220" y="518" width="6" height="3" fill="#f0d4b4"/><rect x="72" y="512" width="9" height="4" fill="#927260"/><rect x="209" y="501" width="4" height="6" fill="#cfa281"/><rect x="3" y="476" width="11" height="4" fill="#ecc9a8"/><rect x="42" y="481" width="10" height="6" fill="#dcae8a"/><rect x="206" y="490" width="4" height="5" fill="#cfa281"/><rect x="27" y="483" width="8" height="6" fill="#e8c4a0"/><rect x="147" y="517" width="6" height="5" fill="#927260"/><rect x="193" y="481" width="11" height="5" fill="#f0d4b4"/><rect x="65" y="476" width="4" height="2" fill="#7e6052"/><rect x="180" y="499" width="7" height="5" fill="#927260"/><rect x="14" y="519" width="5" height="2" fill="#927260"/><rect x="207" y="521" width="8" height="3" fill="#dcae8a"/><rect x="20" y="505" width="7" height="6" fill="#c9a68e"/><rect x="132" y="496" width="10" height="4" fill="#f4e0c6"/><rect x="102" y="481" width="8" height="4" fill="#c9a68e"/><rect x="8" y="493" width="4" height="3" fill="#e8c4a0"/><rect x="213" y="513" width="3" height="4" fill="#e4ba96"/><rect x="10" y="503" width="3" height="3" fill="#ecc9a8"/><rect x="5" y="489" width="5" height="4" fill="#dcae8a"/><rect x="53" y="507" width="9" height="3" fill="#ecc9a8"/><rect x="127" y="516" width="6" height="4" fill="#e4ba96"/><rect x="211" y="486" width="7" height="5" fill="#c9a68e"/><rect x="195" y="515" width="4" height="4" fill="#927260"/><rect x="207" y="511" width="6" height="4" fill="#a88068"/><rect x="210" y="482" width="5" height="2" fill="#f0d4b4"/><rect x="104" y="474" width="4" height="5" fill="#7e6052"/><rect x="151" y="505" width="8" height="4" fill="#e4ba96"/><rect x="139" y="502" width="7" height="2" fill="#e4ba96"/><rect x="10" y="505" width="4" height="2" fill="#7e6052"/><rect x="15" y="495" width="9" height="3" fill="#a88068"/><rect x="54" y="512" width="10" height="4" fill="#a88068"/><rect x="9" y="491" width="4" height="5" fill="#ecc9a8"/><rect x="186" y="488" width="7" height="3" fill="#f4e0c6"/><rect x="152" y="505" width="7" height="3" fill="#f0d4b4"/><rect x="151" y="518" width="9" height="5" fill="#927260"/><rect x="36" y="512" width="10" height="3" fill="#f4e0c6"/><rect x="179" y="476" width="11" height="5" fill="#e4ba96"/><rect x="134" y="512" width="10" height="6" fill="#f0d4b4"/><rect x="217" y="516" width="4" height="3" fill="#927260"/><rect x="66" y="516" width="4" height="5" fill="#927260"/><rect x="137" y="521" width="4" height="5" fill="#cfa281"/><rect x="88" y="495" width="6" height="5" fill="#cfa281"/><rect x="209" y="501" width="8" height="4" fill="#a88068"/><rect x="5" y="508" width="10" height="4" fill="#f4e0c6"/><rect x="136" y="485" width="4" height="3" fill="#a88068"/><rect x="58" y="489" width="4" height="5" fill="#f0d4b4"/><rect x="19" y="511" width="6" height="2" fill="#cfa281"/><rect x="211" y="488" width="8" height="6" fill="#cfa281"/><rect x="59" y="490" width="7" height="4" fill="#cfa281"/><rect x="155" y="479" width="3" height="5" fill="#7e6052"/><rect x="41" y="486" width="8" height="3" fill="#dcae8a"/><rect x="73" y="525" width="12" height="3" fill="#ecdccc"/><rect x="45" y="531" width="11" height="5" fill="#ac9888"/><rect x="94" y="513" width="9" height="5" fill="#46382e"/><rect x="205" y="543" width="8" height="6" fill="#b89e8a"/><rect x="221" y="531" width="8" height="3" fill="#8e786a"/><rect x="38" y="534" width="12" height="5" fill="#b89e8a"/><rect x="68" y="539" width="10" height="5" fill="#d2b8a0"/><rect x="10" y="510" width="12" height="6" fill="#f3eadc"/><rect x="197" y="549" width="4" height="2" fill="#5a4a40"/><rect x="135" y="528" width="11" height="6" fill="#dcc0a4"/><rect x="164" y="533" width="7" height="5" fill="#ecdccc"/><rect x="88" y="545" width="4" height="4" fill="#f3eadc"/><rect x="103" y="510" width="3" height="2" fill="#746054"/><rect x="136" y="539" width="5" height="3" fill="#d2b8a0"/><rect x="129" y="529" width="6" height="6" fill="#ac9888"/><rect x="1" y="522" width="11" height="5" fill="#b89e8a"/><rect x="86" y="526" width="11" height="3" fill="#ac9888"/><rect x="97" y="538" width="6" height="4" fill="#dcc0a4"/><rect x="44" y="527" width="3" height="5" fill="#b89e8a"/><rect x="99" y="541" width="7" height="6" fill="#dcc0a4"/><rect x="149" y="536" width="8" height="5" fill="#746054"/><rect x="13" y="546" width="5" height="3" fill="#b89e8a"/><rect x="144" y="549" width="9" height="4" fill="#ecdccc"/><rect x="132" y="521" width="4" height="4" fill="#d2b8a0"/><rect x="157" y="523" width="3" height="4" fill="#746054"/><rect x="135" y="519" width="5" height="4" fill="#f3eadc"/><rect x="94" y="540" width="7" height="2" fill="#f3eadc"/><rect x="84" y="544" width="8" height="5" fill="#c4ac94"/><rect x="127" y="540" width="5" height="5" fill="#46382e"/><rect x="32" y="526" width="3" height="5" fill="#b89e8a"/><rect x="160" y="522" width="12" height="3" fill="#b89e8a"/><rect x="211" y="523" width="6" height="6" fill="#dcc0a4"/><rect x="61" y="537" width="10" height="4" fill="#e6d6c4"/><rect x="7" y="512" width="7" height="4" fill="#dcc0a4"/><rect x="211" y="532" width="6" height="5" fill="#ac9888"/><rect x="119" y="508" width="5" height="3" fill="#f3eadc"/><rect x="58" y="524" width="6" height="4" fill="#8e786a"/><rect x="86" y="531" width="7" height="5" fill="#ecdccc"/><rect x="207" y="546" width="5" height="3" fill="#ac9888"/><rect x="140" y="547" width="3" height="3" fill="#8e786a"/><rect x="153" y="529" width="3" height="5" fill="#c4ac94"/><rect x="155" y="517" width="9" height="3" fill="#f3eadc"/><rect x="154" y="544" width="3" height="6" fill="#b89e8a"/><rect x="110" y="520" width="6" height="4" fill="#b89e8a"/><rect x="30" y="535" width="12" height="3" fill="#dcc0a4"/><rect x="36" y="546" width="5" height="4" fill="#e6d6c4"/><rect x="133" y="528" width="6" height="5" fill="#c4ac94"/><rect x="47" y="546" width="6" height="3" fill="#d2b8a0"/><rect x="188" y="537" width="10" height="5" fill="#ecdccc"/><rect x="128" y="531" width="4" height="2" fill="#c4ac94"/><rect x="107" y="541" width="8" height="4" fill="#ac9888"/><rect x="201" y="526" width="9" height="4" fill="#8e786a"/><rect x="153" y="537" width="6" height="4" fill="#5a4a40"/><rect x="1" y="518" width="5" height="2" fill="#5a4a40"/><rect x="-1" y="521" width="6" height="4" fill="#e6d6c4"/><rect x="22" y="520" width="11" height="4" fill="#46382e"/><rect x="119" y="516" width="11" height="5" fill="#ecdccc"/><rect x="158" y="527" width="5" height="5" fill="#c4ac94"/><rect x="102" y="530" width="8" height="4" fill="#f3eadc"/><rect x="63" y="520" width="7" height="5" fill="#8e786a"/><rect x="61" y="535" width="5" height="5" fill="#46382e"/><rect x="152" y="537" width="10" height="4" fill="#746054"/><rect x="47" y="530" width="8" height="5" fill="#f3eadc"/><rect x="52" y="511" width="12" height="4" fill="#46382e"/><rect x="5" y="532" width="6" height="3" fill="#ac9888"/><rect x="21" y="531" width="11" height="5" fill="#d2b8a0"/><rect x="21" y="535" width="8" height="6" fill="#746054"/><rect x="120" y="533" width="4" height="5" fill="#ac9888"/><rect x="199" y="528" width="9" height="3" fill="#dcc0a4"/><rect x="180" y="536" width="12" height="6" fill="#b89e8a"/><rect x="46" y="509" width="9" height="3" fill="#ac9888"/><rect x="66" y="518" width="5" height="6" fill="#46382e"/><rect x="140" y="512" width="5" height="5" fill="#d2b8a0"/><rect x="33" y="518" width="6" height="5" fill="#d2b8a0"/><rect x="42" y="514" width="3" height="3" fill="#dcc0a4"/><rect x="218" y="536" width="10" height="6" fill="#d2b8a0"/><rect x="140" y="516" width="9" height="6" fill="#8e786a"/><rect x="65" y="545" width="11" height="5" fill="#746054"/><rect x="38" y="539" width="7" height="6" fill="#f3eadc"/><rect x="57" y="533" width="5" height="2" fill="#5a4a40"/><rect x="50" y="516" width="6" height="5" fill="#d2b8a0"/><rect x="139" y="513" width="9" height="5" fill="#d2b8a0"/><rect x="-2" y="522" width="7" height="4" fill="#ac9888"/><rect x="7" y="531" width="3" height="6" fill="#c4ac94"/><rect x="84" y="532" width="11" height="5" fill="#b89e8a"/><rect x="109" y="516" width="7" height="5" fill="#b89e8a"/><rect x="97" y="535" width="7" height="2" fill="#46382e"/><rect x="4" y="545" width="5" height="4" fill="#746054"/><rect x="165" y="535" width="10" height="5" fill="#8e786a"/><rect x="11" y="523" width="5" height="4" fill="#8e786a"/><rect x="142" y="518" width="4" height="5" fill="#e6d6c4"/><rect x="132" y="544" width="11" height="2" fill="#ac9888"/><rect x="37" y="518" width="7" height="4" fill="#ac9888"/><rect x="34" y="536" width="5" height="4" fill="#746054"/><rect x="81" y="526" width="10" height="2" fill="#8e786a"/><rect x="5" y="528" width="9" height="3" fill="#c4ac94"/><rect x="92" y="548" width="10" height="5" fill="#5a4a40"/><rect x="208" y="531" width="4" height="4" fill="#d2b8a0"/><rect x="205" y="546" width="4" height="5" fill="#5a4a40"/><rect x="62" y="520" width="10" height="5" fill="#d2b8a0"/><rect x="141" y="540" width="9" height="5" fill="#c4ac94"/><rect x="21" y="541" width="12" height="5" fill="#ecdccc"/><rect x="133" y="524" width="12" height="6" fill="#b89e8a"/><rect x="59" y="546" width="5" height="4" fill="#5a4a40"/><rect x="28" y="549" width="7" height="4" fill="#e6d6c4"/><rect x="144" y="541" width="7" height="4" fill="#f3eadc"/><rect x="133" y="522" width="5" height="4" fill="#8e786a"/><rect x="79" y="519" width="9" height="3" fill="#5a4a40"/><rect x="122" y="517" width="6" height="2" fill="#8e786a"/><rect x="138" y="538" width="9" height="4" fill="#46382e"/><rect x="11" y="535" width="9" height="3" fill="#dcc0a4"/><rect x="101" y="516" width="7" height="5" fill="#5a4a40"/><rect x="86" y="522" width="6" height="5" fill="#dcc0a4"/><rect x="136" y="531" width="11" height="5" fill="#f3eadc"/><rect x="131" y="513" width="9" height="4" fill="#e6d6c4"/><rect x="40" y="531" width="9" height="3" fill="#ecdccc"/><rect x="18" y="511" width="3" height="4" fill="#5a4a40"/><rect x="120" y="537" width="11" height="3" fill="#ac9888"/><rect x="142" y="510" width="7" height="2" fill="#b89e8a"/><rect x="10" y="515" width="8" height="3" fill="#b89e8a"/><rect x="190" y="538" width="11" height="3" fill="#ecdccc"/><rect x="196" y="539" width="8" height="4" fill="#8e786a"/><rect x="216" y="537" width="6" height="5" fill="#ecdccc"/><rect x="44" y="526" width="7" height="5" fill="#dcc0a4"/><rect x="111" y="534" width="8" height="2" fill="#e6d6c4"/><rect x="79" y="523" width="4" height="6" fill="#d2b8a0"/><rect x="99" y="520" width="8" height="5" fill="#746054"/><rect x="151" y="549" width="11" height="5" fill="#c4ac94"/><rect x="23" y="511" width="9" height="4" fill="#ecdccc"/><rect x="96" y="549" width="8" height="2" fill="#f3eadc"/><rect x="96" y="541" width="6" height="3" fill="#f3eadc"/><rect x="-3" y="539" width="5" height="3" fill="#e6d6c4"/><rect x="197" y="514" width="10" height="2" fill="#ecdccc"/><rect x="71" y="515" width="5" height="6" fill="#5a4a40"/><rect x="72" y="548" width="4" height="5" fill="#ac9888"/><rect x="217" y="532" width="6" height="4" fill="#f3eadc"/><rect x="202" y="544" width="5" height="4" fill="#5a4a40"/><rect x="43" y="547" width="9" height="2" fill="#e6d6c4"/><rect x="136" y="549" width="6" height="5" fill="#8e786a"/><rect x="50" y="543" width="11" height="4" fill="#46382e"/><rect x="52" y="545" width="8" height="3" fill="#e6d6c4"/><rect x="55" y="534" width="5" height="5" fill="#d2b8a0"/><rect x="47" y="548" width="4" height="4" fill="#f3eadc"/><rect x="183" y="515" width="7" height="5" fill="#c4ac94"/><rect x="13" y="517" width="5" height="4" fill="#f3eadc"/><rect x="155" y="514" width="8" height="4" fill="#b89e8a"/><rect x="173" y="542" width="7" height="3" fill="#c4ac94"/><rect x="173" y="547" width="4" height="3" fill="#dcc0a4"/><rect x="187" y="523" width="10" height="5" fill="#5a4a40"/><rect x="141" y="525" width="5" height="3" fill="#ac9888"/><rect x="35" y="550" width="11" height="4" fill="#ecdccc"/><rect x="28" y="513" width="9" height="6" fill="#ac9888"/><rect x="172" y="531" width="7" height="2" fill="#ac9888"/><rect x="103" y="523" width="5" height="3" fill="#746054"/><rect x="65" y="543" width="7" height="3" fill="#b89e8a"/><rect x="70" y="543" width="5" height="2" fill="#ac9888"/><rect x="165" y="512" width="8" height="3" fill="#dcc0a4"/><rect x="68" y="534" width="3" height="4" fill="#c4ac94"/><rect x="26" y="519" width="9" height="5" fill="#ecdccc"/><rect x="24" y="533" width="10" height="2" fill="#46382e"/><rect x="110" y="536" width="5" height="4" fill="#5a4a40"/><rect x="127" y="551" width="11" height="6" fill="#dcc0a4"/><rect x="103" y="536" width="10" height="5" fill="#e6d6c4"/><rect x="193" y="530" width="10" height="5" fill="#d2b8a0"/><rect x="182" y="534" width="10" height="4" fill="#e6d6c4"/><rect x="191" y="540" width="12" height="5" fill="#ac9888"/><rect x="101" y="527" width="8" height="3" fill="#b89e8a"/><rect x="187" y="522" width="10" height="2" fill="#46382e"/><rect x="200" y="524" width="5" height="3" fill="#ecdccc"/><rect x="130" y="541" width="9" height="4" fill="#46382e"/><rect x="93" y="536" width="3" height="2" fill="#dcc0a4"/><rect x="27" y="513" width="5" height="4" fill="#b89e8a"/><rect x="213" y="529" width="5" height="5" fill="#ecdccc"/><rect x="183" y="515" width="12" height="3" fill="#dcc0a4"/><rect x="43" y="548" width="4" height="3" fill="#f3eadc"/><rect x="17" y="547" width="3" height="5" fill="#c4ac94"/><rect x="60" y="512" width="11" height="4" fill="#c4ac94"/><rect x="99" y="527" width="7" height="3" fill="#dcc0a4"/><rect x="211" y="530" width="11" height="6" fill="#d2b8a0"/><rect x="6" y="514" width="6" height="3" fill="#8e786a"/><rect x="198" y="532" width="9" height="3" fill="#c4ac94"/><rect x="68" y="509" width="6" height="3" fill="#e6d6c4"/><rect x="151" y="511" width="9" height="3" fill="#e6d6c4"/><rect x="-1" y="513" width="10" height="3" fill="#d2b8a0"/><rect x="209" y="543" width="5" height="4" fill="#dcc0a4"/><rect x="163" y="541" width="6" height="4" fill="#c4ac94"/><rect x="19" y="512" width="12" height="6" fill="#ac9888"/><rect x="132" y="548" width="12" height="6" fill="#e6d6c4"/><rect x="70" y="545" width="11" height="3" fill="#dcc0a4"/><rect x="96" y="521" width="11" height="5" fill="#f3eadc"/><rect x="90" y="512" width="10" height="2" fill="#5a4a40"/><rect x="62" y="520" width="7" height="6" fill="#b89e8a"/><rect x="90" y="545" width="7" height="4" fill="#b89e8a"/><rect x="47" y="523" width="4" height="2" fill="#746054"/><rect x="62" y="520" width="11" height="4" fill="#c4ac94"/><rect x="148" y="509" width="6" height="4" fill="#746054"/><rect x="137" y="512" width="3" height="5" fill="#e6d6c4"/><rect x="3" y="513" width="7" height="2" fill="#8e786a"/><rect x="96" y="523" width="8" height="2" fill="#ac9888"/><rect x="185" y="525" width="9" height="2" fill="#746054"/><rect x="110" y="540" width="10" height="5" fill="#d2b8a0"/><rect x="64" y="514" width="12" height="6" fill="#46382e"/><rect x="219" y="530" width="11" height="5" fill="#b89e8a"/><rect x="122" y="531" width="11" height="4" fill="#e6d6c4"/><rect x="210" y="524" width="4" height="4" fill="#e6d6c4"/><rect x="168" y="547" width="4" height="5" fill="#746054"/><rect x="47" y="508" width="10" height="6" fill="#5a4a40"/><rect x="89" y="549" width="7" height="6" fill="#b89e8a"/><rect x="115" y="548" width="3" height="4" fill="#c4ac94"/><rect x="127" y="515" width="6" height="4" fill="#dcc0a4"/><rect x="121" y="513" width="8" height="3" fill="#746054"/><rect x="103" y="526" width="7" height="4" fill="#8e786a"/><rect x="201" y="548" width="10" height="3" fill="#f3eadc"/><rect x="202" y="517" width="7" height="5" fill="#ecdccc"/><rect x="67" y="551" width="3" height="2" fill="#f3eadc"/><rect x="211" y="551" width="11" height="5" fill="#ac9888"/><rect x="174" y="518" width="11" height="3" fill="#ac9888"/><rect x="59" y="527" width="11" height="4" fill="#e6d6c4"/><rect x="169" y="540" width="8" height="3" fill="#46382e"/><rect x="154" y="534" width="10" height="3" fill="#5a4a40"/><rect x="44" y="550" width="5" height="6" fill="#8e786a"/><rect x="186" y="548" width="11" height="5" fill="#b89e8a"/><rect x="195" y="537" width="11" height="5" fill="#8e786a"/><rect x="10" y="510" width="10" height="4" fill="#b89e8a"/><rect x="97" y="551" width="9" height="5" fill="#d2b8a0"/><rect x="9" y="527" width="12" height="5" fill="#746054"/><rect x="177" y="539" width="7" height="3" fill="#dcc0a4"/><rect x="182" y="527" width="9" height="3" fill="#746054"/><rect x="185" y="548" width="4" height="6" fill="#d2b8a0"/><rect x="26" y="533" width="10" height="5" fill="#d2b8a0"/><rect x="161" y="534" width="9" height="3" fill="#c4ac94"/><rect x="75" y="535" width="12" height="5" fill="#46382e"/><rect x="147" y="547" width="8" height="5" fill="#dcc0a4"/><rect x="-1" y="528" width="9" height="5" fill="#b89e8a"/><rect x="10" y="524" width="9" height="3" fill="#dcc0a4"/><rect x="130" y="550" width="11" height="5" fill="#f3eadc"/><rect x="199" y="528" width="7" height="2" fill="#c4ac94"/><rect x="10" y="547" width="8" height="3" fill="#ac9888"/><rect x="18" y="538" width="6" height="4" fill="#ac9888"/><rect x="111" y="512" width="6" height="2" fill="#b89e8a"/><rect x="40" y="550" width="8" height="3" fill="#8e786a"/><rect x="90" y="531" width="9" height="3" fill="#46382e"/><rect x="154" y="534" width="6" height="4" fill="#5a4a40"/><rect x="171" y="549" width="10" height="6" fill="#e6d6c4"/><rect x="163" y="545" width="3" height="3" fill="#d2b8a0"/><rect x="184" y="512" width="8" height="4" fill="#b89e8a"/><rect x="95" y="513" width="7" height="4" fill="#c4ac94"/><rect x="57" y="530" width="12" height="4" fill="#ac9888"/><rect x="1" y="540" width="4" height="3" fill="#dcc0a4"/><rect x="68" y="534" width="9" height="6" fill="#f3eadc"/><rect x="204" y="546" width="5" height="5" fill="#ac9888"/><rect x="179" y="534" width="7" height="4" fill="#d2b8a0"/><rect x="158" y="513" width="8" height="2" fill="#e6d6c4"/><rect x="196" y="511" width="10" height="4" fill="#dcc0a4"/><rect x="97" y="529" width="5" height="5" fill="#8e786a"/><rect x="149" y="548" width="4" height="5" fill="#d2b8a0"/><rect x="159" y="526" width="11" height="3" fill="#46382e"/><rect x="58" y="531" width="6" height="6" fill="#c4ac94"/><rect x="85" y="512" width="5" height="6" fill="#ac9888"/><rect x="166" y="549" width="12" height="4" fill="#8e786a"/><rect x="201" y="528" width="9" height="3" fill="#746054"/><rect x="63" y="549" width="5" height="3" fill="#e6d6c4"/><rect x="32" y="544" width="8" height="4" fill="#46382e"/><rect x="67" y="549" width="10" height="4" fill="#ac9888"/><rect x="76" y="528" width="9" height="4" fill="#f3eadc"/><rect x="49" y="538" width="9" height="5" fill="#d2b8a0"/><rect x="63" y="517" width="8" height="4" fill="#ac9888"/><rect x="118" y="548" width="3" height="3" fill="#f3eadc"/><rect x="63" y="511" width="3" height="6" fill="#c4ac94"/><rect x="192" y="545" width="3" height="6" fill="#f3eadc"/><rect x="145" y="534" width="4" height="4" fill="#8e786a"/><rect x="18" y="513" width="10" height="4" fill="#ac9888"/><rect x="85" y="518" width="10" height="2" fill="#46382e"/><rect x="50" y="524" width="7" height="3" fill="#dcc0a4"/><rect x="41" y="518" width="7" height="3" fill="#46382e"/><rect x="111" y="550" width="6" height="5" fill="#46382e"/><rect x="207" y="513" width="11" height="6" fill="#746054"/><rect x="49" y="550" width="4" height="4" fill="#46382e"/><rect x="-3" y="517" width="4" height="2" fill="#b89e8a"/><rect x="90" y="544" width="12" height="2" fill="#5a4a40"/><rect x="130" y="514" width="9" height="5" fill="#b89e8a"/><rect x="65" y="514" width="4" height="4" fill="#8e786a"/><rect x="32" y="535" width="11" height="5" fill="#e6d6c4"/><rect x="183" y="544" width="10" height="3" fill="#c4ac94"/><rect x="97" y="517" width="7" height="4" fill="#e6d6c4"/><rect x="93" y="520" width="11" height="6" fill="#f3eadc"/><rect x="205" y="546" width="5" height="4" fill="#ac9888"/><rect x="197" y="550" width="8" height="4" fill="#46382e"/><rect x="11" y="532" width="7" height="2" fill="#746054"/><rect x="43" y="529" width="4" height="4" fill="#46382e"/><rect x="8" y="527" width="10" height="4" fill="#746054"/><rect x="150" y="543" width="9" height="3" fill="#46382e"/><rect x="92" y="511" width="4" height="5" fill="#b89e8a"/><rect x="97" y="511" width="9" height="5" fill="#b89e8a"/><rect x="142" y="533" width="9" height="2" fill="#f3eadc"/><rect x="18" y="523" width="10" height="3" fill="#ac9888"/><rect x="7" y="519" width="8" height="4" fill="#46382e"/><rect x="42" y="517" width="3" height="2" fill="#746054"/><rect x="-1" y="515" width="8" height="3" fill="#b89e8a"/><rect x="217" y="517" width="8" height="5" fill="#46382e"/><path d="M0 524 Q10 516 22 522 Q34 518 44 530 Q56 532 62 541 L70 551 H0 Z" fill="#3f2d1c"/><path d="M60 551 L74 534 Q100 524 124 534 L136 551 Z" fill="#4e3c2c" opacity="0.85"/><path d="M132 551 L146 530 Q170 522 196 536 L205 551 Z" fill="#5a4638" opacity="0.7"/><rect x="100" y="540" width="22" height="3" fill="#efe6dc"/><rect x="116" y="536" width="10" height="3" fill="#efe6dc"/><rect x="90" y="546" width="36" height="3" fill="#efe6dc"/><rect x="142" y="543" width="18" height="3" fill="#efe6dc"/><rect x="160" y="547" width="26" height="3" fill="#efe6dc"/><path d="M105.6 60 V84" stroke="#3a2418" stroke-width="2.4"/><path d="M102 61.5 H109.5" stroke="#3a2418" stroke-width="1.2"/><path d="M105.6 83 V106" stroke="#3a2418" stroke-width="4.6"/><path d="M103.6 105 H107.6 L115 113 H96.5 Z" fill="#3a2418" opacity="0.9"/><path d="M96.5 113 H115 L119 119 L122.2 126 V134.5 H90.3 V126 L93 119 Z" fill="#44291c" opacity="0.92"/><path d="M109 113 H117 L121 118 L122.2 126 H109 Z" fill="#9a5a2e" opacity="0.7"/><path d="M90.3 126.5 H109 V134.5 H90.3 Z" fill="#5a463a"/><path d="M109 126.5 H122.2 V134.5 H109 Z" fill="#d8842f"/><path d="M88.5 118 V127 M123.8 118 V127" stroke="#6a5648" stroke-width="1.2"/><path d="M92 134 H120.4 L119 149 L121 171 L128.5 256 L134.8 319 L143.3 384 L71 384 L80.8 319 L87 256 L92.4 171 L94.4 149 Z" fill="#6a4028" opacity="0.16"/><path d="M92 134 H109.5 V384 H71 L80.8 319 L87 256 L92.4 171 L94.4 149 Z" fill="url(#latd)"/><path d="M109.5 134 H120.4 L119 149 L121 171 L128.5 256 L134.8 319 L143.3 384 H109.5 Z" fill="url(#latl)"/><path d="M92 134 H109.5 V162 H93 L94.4 149 Z" fill="#3e281c" opacity="0.8"/><path d="M109.5 134 H120.4 L119 149 L120.2 162 H109.5 Z" fill="#a86030" opacity="0.75"/><path d="M92 134 L94.4 149 L92.4 171 L87 256 L80.8 319 L71 384" fill="none" stroke="#3a2418" stroke-width="1.6"/><path d="M120.4 134 L119 149 L121 171 L128.5 256 L134.8 319 L143.3 384" fill="none" stroke="#6e3a1c" stroke-width="1.6"/><path d="M106 162 V384" stroke="#35221a" stroke-width="5" opacity="0.85"/><path d="M110 162 V384" stroke="#b06a34" stroke-width="1.6"/><path d="M118 200 L126 384" stroke="#b8682c" stroke-width="1.6" opacity="0.8"/><path d="M90 268 H126 V272 H90 Z" fill="#3a261c" opacity="0.7"/><path d="M74 378 H141 V386 H74 Z" fill="#33221a" opacity="0.8"/><path d="M65.3 384.5 H150.4 V390.5 H65.3 Z" fill="url(#tw)"/><path d="M67.5 390 H149 L152 414 H65 Z" fill="url(#tw)" opacity="0.55"/><path d="M67.5 390 H149 L152 414 H65 Z" fill="url(#l2d)"/><path d="M69 396 H109.5 V404 H68 Z" fill="#2a1a12" opacity="0.55"/><path d="M109.5 396 H149.5 V404 H109.5 Z" fill="#5e3016" opacity="0.55"/><path d="M66 409 H151" stroke="#2e1e16" stroke-width="2" opacity="0.7"/><path d="M65 414 H90 L77.7 473 H41 Z" fill="#4e382e" opacity="0.45"/><path d="M65 414 H90 L77.7 473 H41 Z" fill="url(#l2d)"/><path d="M91.7 414 H109.5 V473 H90.2 Z" fill="#44302a" opacity="0.55"/><path d="M91.7 414 H109.5 V473 H90.2 Z" fill="url(#l2d)"/><path d="M109.5 414 H124 L126 473 H109.5 Z" fill="#945a30" opacity="0.5"/><path d="M109.5 414 H124 L126 473 H109.5 Z" fill="url(#l2l)"/><path d="M125.5 414 H152 L174 473 H141 Z" fill="#8e5630" opacity="0.45"/><path d="M125.5 414 H152 L174 473 H141 Z" fill="url(#l2d)"/><path d="M65 414 L41 473 M90 414 L77.7 473 M78 414 L59 473 M91.7 414 L90.2 473" fill="none" stroke="#33221a" stroke-width="2"/><path d="M109.5 414 V473" stroke="#2e1c12" stroke-width="2.5"/><path d="M124 414 L126 473 M125.5 414 L141 473 M152 414 L174 473 M139 414 L158 473" fill="none" stroke="#6a3a1e" stroke-width="2"/><path d="M38 466 H109.5 V475 H38 Z" fill="#2c1e18"/><path d="M109.5 468 H180 V475 H109.5 Z" fill="#6b3d23"/><path d="M27.8 474 H189.3 V485 H27.8 Z" fill="url(#tw)"/><path d="M30 477 H109.5 V482 H30 Z" fill="#2a1a14" opacity="0.6"/><path d="M109.5 477 H187 V482 H109.5 Z" fill="#5e3016" opacity="0.5"/><path d="M27.8 485 H189.3 L196.5 509 H19 Z" fill="url(#tw)" opacity="0.72"/><path d="M27.8 485 H109.5 V509 H19 Z" fill="url(#l2d)" opacity="0.8"/><path d="M109.5 485 H189.3 L196.5 509 H109.5 Z" fill="url(#l2l)" opacity="0.8"/><path d="M27.8 485.5 H189.3" stroke="#2c1e18" stroke-width="2"/><path d="M26 492 H109.5" stroke="#2a1a14" stroke-width="6" stroke-dasharray="2 2.4" opacity="0.7"/><path d="M109.5 492 H191" stroke="#5a2e14" stroke-width="6" stroke-dasharray="2 2.4" opacity="0.7"/><path d="M22 503 H194" stroke="#3a2519" stroke-width="1.5" stroke-dasharray="3 2" opacity="0.8"/><path d="M19 509 L7 531 L14 538 L25 538 Q58 486 92 538 H131 Q166 486 203 538 L216 536 L196.5 509 Z" fill="url(#tw)" opacity="0.93"/><path d="M92 509 H109.5 V538 H92 Z" fill="url(#l2d)" opacity="0.7"/><path d="M109.5 509 H131 V538 H109.5 Z" fill="url(#l2l)" opacity="0.7"/><path d="M19 509 L7 531 L14 538 L25 538 Q40 514 58 509 Z" fill="url(#l2d)" opacity="0.8"/><path d="M196.5 509 L216 536 L203 538 Q190 516 170 509 Z" fill="url(#l2l)" opacity="0.8"/><path d="M21 540 Q58 484 94 540" fill="none" stroke="#33221a" stroke-width="3.5"/><path d="M129 540 Q166 484 207 540" fill="none" stroke="#b87238" stroke-width="3.5"/><path d="M32 538 Q58 500 86 538 Z" fill="#2a1c14" opacity="0.3"/><path d="M138 538 Q166 500 196 538 Z" fill="#2a1c14" opacity="0.22"/></svg>
<!-- STATUS -->
<div style="left:0px;top:1013px;width:1226px;height:23px;background:#f3f2f1;"></div>
<div style="left:0px;top:1013px;width:1226px;height:1px;background:#c8c6c4;"></div>
<span id="t78" class="t" style="left:9.5px;top:1019.00px;font-size:10.7px;letter-spacing:0.166px;">Page 2 of 2</span>
<span id="t79" class="t" style="left:85px;top:1019.00px;font-size:10.7px;letter-spacing:0.438px;">2 words</span>
<svg style="left:145px;top:1018px;" width="15" height="14" viewBox="0 0 15 14"><path d="M0.6 0.6 H5.4 Q7 0.6 7 2.2 V11.6 Q7 10.4 5.4 10.4 H0.6 Z" fill="none" stroke="#444" stroke-width="1.1"/><path d="M7 2.2 Q7 0.6 8.6 0.6 H13.4 V6.5" fill="none" stroke="#444" stroke-width="1.1"/><path d="M7.4 9.4 L9.8 12 L13.8 7.4" fill="none" stroke="#444" stroke-width="1.2"/></svg>
<span id="t80" class="t" style="left:177px;top:1019.00px;font-size:10.7px;letter-spacing:0.291px;">English (United States)</span>
<svg style="left:311px;top:1016px;" width="16" height="16" viewBox="0 0 16 16"><circle cx="6.5" cy="2.3" r="1.7" fill="none" stroke="#444" stroke-width="1"/><path d="M0.8 5.2 L5 6.2 V9 L2.4 14.4 M12.2 5.2 L8 6.2 V9 M5 6.2 H8" fill="none" stroke="#444" stroke-width="1.1"/><path d="M8.6 9.6 L14 15 M14 9.6 L8.6 15" fill="none" stroke="#444" stroke-width="1.1"/></svg>
<span id="t81" class="t" style="left:330px;top:1019.00px;font-size:10.7px;letter-spacing:0.275px;">Accessibility: Investigate</span>
<svg style="left:859.5px;top:1016px;" width="15" height="15" viewBox="0 0 15 15"><path d="M0.5 3.5 V0.5 H3.5 M11 0.5 H14 V3.5 M14 11 V14 H11 M3.5 14 H0.5 V11" fill="none" stroke="#444" stroke-width="1"/><path d="M3.5 3 H8.5 L11 5.5 V11.8 H3.5 Z M8.5 3 V5.5 H11" fill="none" stroke="#444" stroke-width="1"/></svg>
<span id="t82" class="t" style="left:877px;top:1019.00px;font-size:10.7px;letter-spacing:0.078px;">Focus</span>
<svg style="left:932px;top:1017px;" width="14" height="13" viewBox="0 0 14 13"><path d="M0.5 0.8 H5.6 Q6.8 0.8 6.8 2 V12 Q6.8 10.8 5.6 10.8 H0.5 Z M13.1 0.8 H8 Q6.8 0.8 6.8 2 V12 Q6.8 10.8 8 10.8 H13.1 Z" fill="none" stroke="#444" stroke-width="1"/><path d="M2 3.5 H5 M2 5.5 H5 M2 7.5 H5 M8.6 3.5 H11.6 M8.6 5.5 H11.6 M8.6 7.5 H11.6" stroke="#444" stroke-width="0.8"/></svg>
<div style="left:959px;top:1014px;width:40px;height:22px;background:#c8c6c4;"></div>
<svg style="left:972px;top:1017px;" width="13" height="14" viewBox="0 0 13 14"><rect x="0.5" y="0.5" width="11.6" height="13" fill="#fff" stroke="#444" stroke-width="1"/><path d="M2.5 3.5 H10 M2.5 5.5 H10 M2.5 7.5 H10 M2.5 9.5 H10 M2.5 11.5 H10" stroke="#444" stroke-width="0.9"/></svg>
<svg style="left:1011.5px;top:1017px;" width="16" height="15" viewBox="0 0 16 15"><path d="M7 13 H0.5 V0.5 H11.6 V6" fill="none" stroke="#444" stroke-width="1"/><path d="M2.5 3.5 H9.6 M2.5 5.5 H9.6 M2.5 7.5 H6.5 M2.5 9.5 H5.5" stroke="#444" stroke-width="0.9"/><circle cx="11" cy="10.4" r="4" fill="#f3f2f1" stroke="#333" stroke-width="1.1"/><path d="M7 10.4 H15 M11 6.4 V14.4" stroke="#333" stroke-width="0.9"/><ellipse cx="11" cy="10.4" rx="1.8" ry="4" fill="none" stroke="#333" stroke-width="0.8"/></svg>
<div style="left:1044.5px;top:1024px;width:8px;height:1px;background:#444;"></div>
<div style="left:1058px;top:1024px;width:100px;height:1px;background:#555;"></div>
<div style="left:1108px;top:1022px;width:1px;height:5px;background:#555;"></div>
<div style="left:1090px;top:1019px;width:5px;height:11px;background:#3b3b3b;"></div>
<div style="left:1163px;top:1024px;width:8px;height:1px;background:#444;"></div>
<div style="left:1166.5px;top:1020.5px;width:1px;height:8px;background:#444;"></div>
<span id="t83" class="t" style="left:1184.5px;top:1019.00px;font-size:10.7px;letter-spacing:-0.469px;">70%</span>
<div style="left:0px;top:31px;width:1px;height:1006px;background:#2b4475;"></div>
<div style="left:1px;top:31px;width:1px;height:1005px;background:#dbe9fa;"></div>
<div style="left:0px;top:1035px;width:1226px;height:1px;background:#2d4a55;"></div>
<div style="left:0px;top:1036px;width:1226px;height:1px;background:#d9e6c0;"></div>
<div style="left:1224px;top:0px;width:2px;height:1037px;background:#2f4a4a;"></div>
<div style="left:1224px;top:0px;width:2px;height:31px;background:#264d86;"></div>
</div>
</body>
</html>
